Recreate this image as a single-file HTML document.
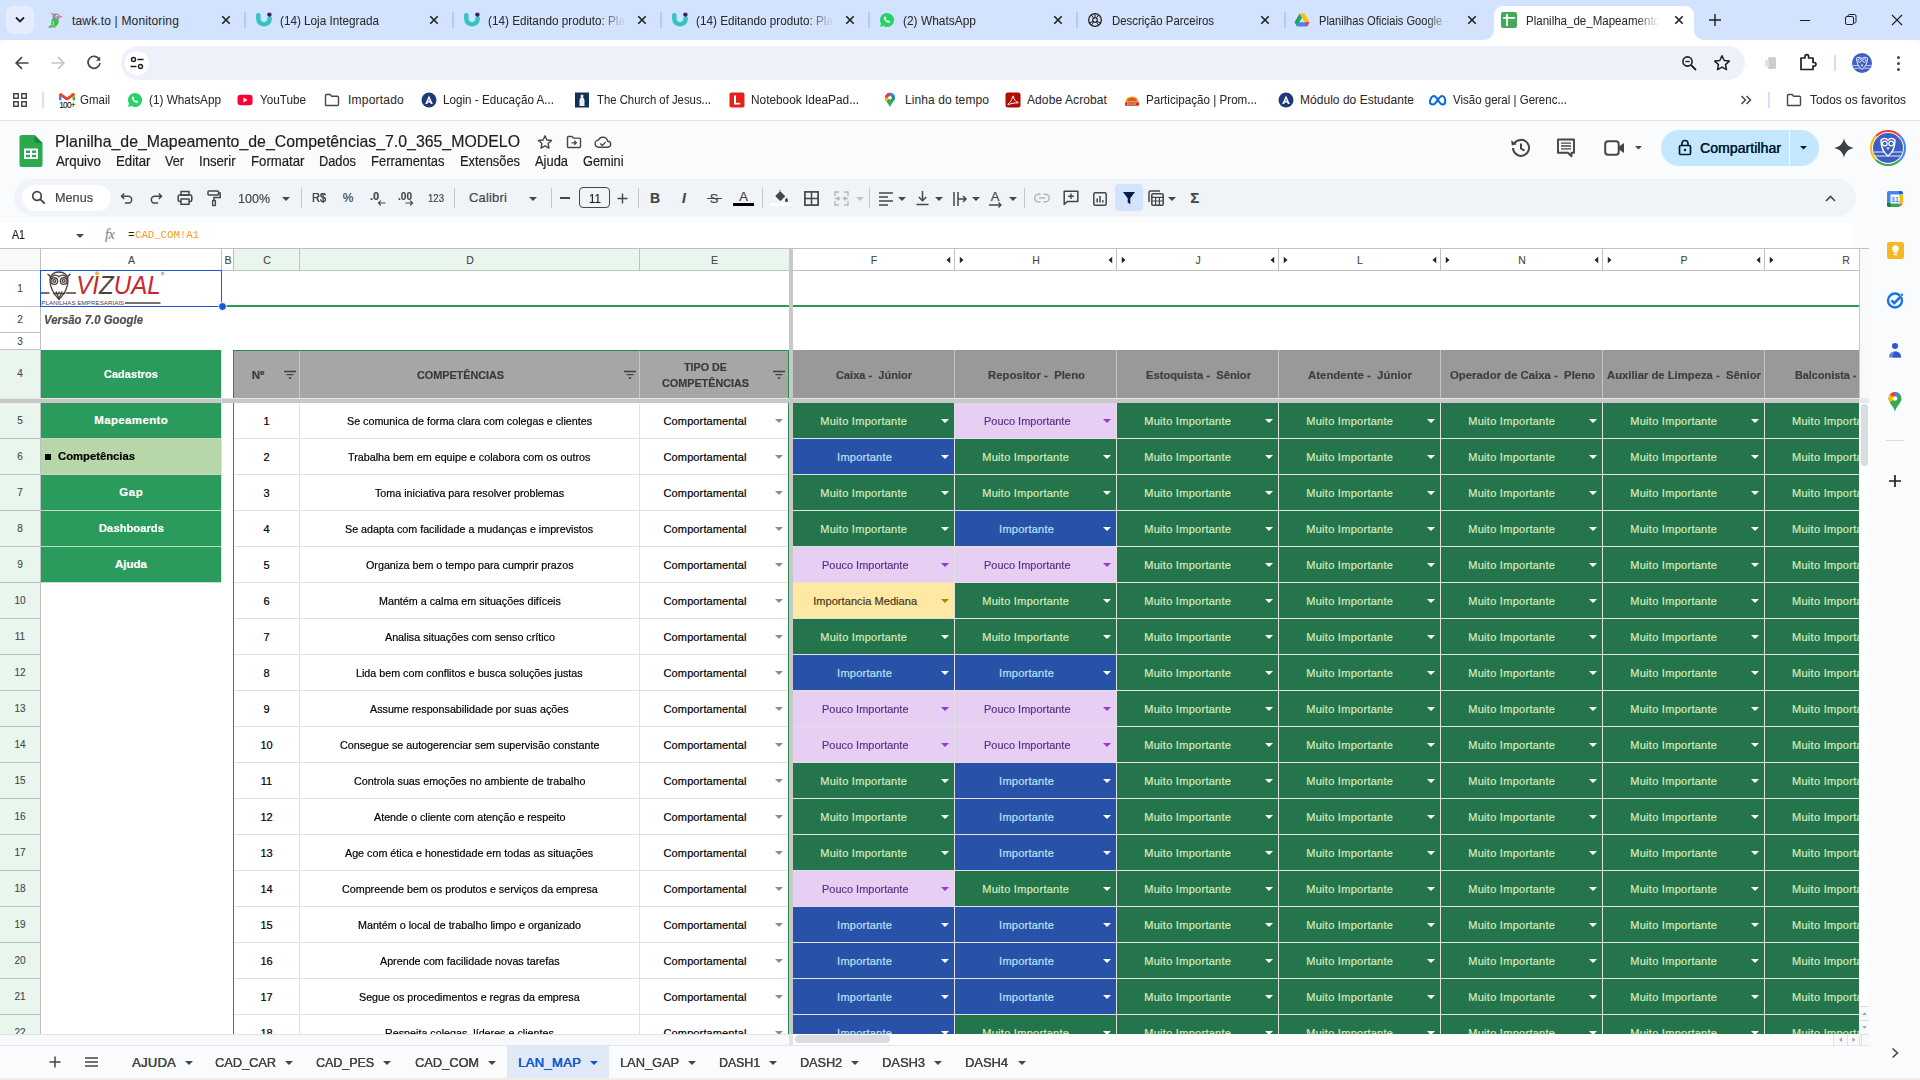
<!DOCTYPE html><html lang="pt-BR"><head><meta charset="utf-8"><title>Planilha_de_Mapeamento_de_Competências_7.0_365_MODELO</title><style>
html,body{margin:0;padding:0}
body{width:1920px;height:1080px;position:relative;overflow:hidden;background:#f9fbfd;font-family:"Liberation Sans",sans-serif;}
.b{position:absolute;display:block}
svg{overflow:visible}
.t{position:absolute;white-space:pre;display:block;transform-origin:0 50%;-webkit-text-stroke:0.2px}
.dd{position:absolute;width:0;height:0;border-left:4px solid transparent;border-right:4px solid transparent;border-top:4px solid #fff;margin-left:-4px}
</style></head><body>
<!--GRID--><div class="b" style="left:0;top:0;width:1859px;height:1034px;overflow:hidden"><div class="b" style="left:0px;top:249px;width:1859px;height:786px;background:#ffffff;"></div>
<div class="b" style="left:0px;top:249px;width:1859px;height:22px;background:#ffffff;"></div>
<div class="b" style="left:0px;top:249px;width:40px;height:22px;background:#f8f9fa;"></div>
<div class="b" style="left:234px;top:249px;width:555px;height:22px;background:#e9f6ee;"></div>
<div class="b" style="left:0px;top:248px;width:1859px;height:1px;background:#c0c0c0;"></div>
<div class="b" style="left:0px;top:270px;width:1859px;height:1px;background:#c0c0c0;"></div>
<div class="b" style="left:221px;top:249px;width:1px;height:22px;background:#c0c0c0;"></div>
<span class="t" style="left:128.00px;top:252.50px;line-height:14px;font-size:10.5px;color:#444746;-webkit-text-stroke:0.1px;">A</span>
<div class="b" style="left:233px;top:249px;width:1px;height:22px;background:#c0c0c0;"></div>
<span class="t" style="left:224.50px;top:252.50px;line-height:14px;font-size:10.5px;color:#444746;-webkit-text-stroke:0.1px;">B</span>
<div class="b" style="left:299px;top:249px;width:1px;height:22px;background:#c0c0c0;"></div>
<span class="t" style="left:263.21px;top:252.50px;line-height:14px;font-size:10.5px;color:#444746;-webkit-text-stroke:0.1px;">C</span>
<div class="b" style="left:639px;top:249px;width:1px;height:22px;background:#c0c0c0;"></div>
<span class="t" style="left:466.21px;top:252.50px;line-height:14px;font-size:10.5px;color:#444746;-webkit-text-stroke:0.1px;">D</span>
<span class="t" style="left:711.00px;top:252.50px;line-height:14px;font-size:10.5px;color:#444746;-webkit-text-stroke:0.1px;">E</span>
<div class="b" style="left:954px;top:249px;width:1px;height:22px;background:#c0c0c0;"></div>
<span class="t" style="left:870.79px;top:252.50px;line-height:14px;font-size:10.5px;color:#444746;-webkit-text-stroke:0.1px;">F</span>
<div class="b" style="left:1116px;top:249px;width:1px;height:22px;background:#c0c0c0;"></div>
<span class="t" style="left:1032.21px;top:252.50px;line-height:14px;font-size:10.5px;color:#444746;-webkit-text-stroke:0.1px;">H</span>
<div class="b" style="left:1278px;top:249px;width:1px;height:22px;background:#c0c0c0;"></div>
<span class="t" style="left:1195.38px;top:252.50px;line-height:14px;font-size:10.5px;color:#444746;-webkit-text-stroke:0.1px;">J</span>
<div class="b" style="left:1440px;top:249px;width:1px;height:22px;background:#c0c0c0;"></div>
<span class="t" style="left:1357.08px;top:252.50px;line-height:14px;font-size:10.5px;color:#444746;-webkit-text-stroke:0.1px;">L</span>
<div class="b" style="left:1602px;top:249px;width:1px;height:22px;background:#c0c0c0;"></div>
<span class="t" style="left:1518.21px;top:252.50px;line-height:14px;font-size:10.5px;color:#444746;-webkit-text-stroke:0.1px;">N</span>
<div class="b" style="left:1764px;top:249px;width:1px;height:22px;background:#c0c0c0;"></div>
<span class="t" style="left:1680.50px;top:252.50px;line-height:14px;font-size:10.5px;color:#444746;-webkit-text-stroke:0.1px;">P</span>
<div class="b" style="left:1926px;top:249px;width:1px;height:22px;background:#c0c0c0;"></div>
<span class="t" style="left:1842.21px;top:252.50px;line-height:14px;font-size:10.5px;color:#444746;-webkit-text-stroke:0.1px;">R</span>
<div class="b" style="left:40px;top:249px;width:1px;height:22px;background:#c0c0c0;"></div>
<svg class="b" style="left:945px;top:256px" width="20" height="8" viewBox="0 0 20 8"><path d="M5.200 .800v6.400L1.500 4zM14.800 .800v6.400L18.500 4z" fill="#222"/></svg>
<svg class="b" style="left:1107px;top:256px" width="20" height="8" viewBox="0 0 20 8"><path d="M5.200 .800v6.400L1.500 4zM14.800 .800v6.400L18.500 4z" fill="#222"/></svg>
<svg class="b" style="left:1269px;top:256px" width="20" height="8" viewBox="0 0 20 8"><path d="M5.200 .800v6.400L1.500 4zM14.800 .800v6.400L18.500 4z" fill="#222"/></svg>
<svg class="b" style="left:1431px;top:256px" width="20" height="8" viewBox="0 0 20 8"><path d="M5.200 .800v6.400L1.500 4zM14.800 .800v6.400L18.500 4z" fill="#222"/></svg>
<svg class="b" style="left:1593px;top:256px" width="20" height="8" viewBox="0 0 20 8"><path d="M5.200 .800v6.400L1.500 4zM14.800 .800v6.400L18.500 4z" fill="#222"/></svg>
<svg class="b" style="left:1755px;top:256px" width="20" height="8" viewBox="0 0 20 8"><path d="M5.200 .800v6.400L1.500 4zM14.800 .800v6.400L18.500 4z" fill="#222"/></svg>
<div class="b" style="left:0px;top:271px;width:40px;height:36px;background:#ffffff;"></div>
<span class="t" style="left:17.22px;top:282.00px;line-height:13px;font-size:10px;color:#444746;-webkit-text-stroke:0.1px;">1</span>
<div class="b" style="left:0px;top:307px;width:40px;height:26px;background:#ffffff;"></div>
<span class="t" style="left:17.22px;top:313.00px;line-height:13px;font-size:10px;color:#444746;-webkit-text-stroke:0.1px;">2</span>
<div class="b" style="left:0px;top:333px;width:40px;height:17px;background:#ffffff;"></div>
<span class="t" style="left:17.22px;top:334.50px;line-height:13px;font-size:10px;color:#444746;-webkit-text-stroke:0.1px;">3</span>
<div class="b" style="left:0px;top:350px;width:40px;height:48px;background:#e9f6ee;"></div>
<span class="t" style="left:17.22px;top:367.00px;line-height:13px;font-size:10px;color:#444746;-webkit-text-stroke:0.1px;">4</span>
<div class="b" style="left:0px;top:403px;width:40px;height:36px;background:#e9f6ee;"></div>
<span class="t" style="left:17.22px;top:414.00px;line-height:13px;font-size:10px;color:#444746;-webkit-text-stroke:0.1px;">5</span>
<div class="b" style="left:0px;top:439px;width:40px;height:36px;background:#e9f6ee;"></div>
<span class="t" style="left:17.22px;top:450.00px;line-height:13px;font-size:10px;color:#444746;-webkit-text-stroke:0.1px;">6</span>
<div class="b" style="left:0px;top:475px;width:40px;height:36px;background:#e9f6ee;"></div>
<span class="t" style="left:17.22px;top:486.00px;line-height:13px;font-size:10px;color:#444746;-webkit-text-stroke:0.1px;">7</span>
<div class="b" style="left:0px;top:511px;width:40px;height:36px;background:#e9f6ee;"></div>
<span class="t" style="left:17.22px;top:522.00px;line-height:13px;font-size:10px;color:#444746;-webkit-text-stroke:0.1px;">8</span>
<div class="b" style="left:0px;top:547px;width:40px;height:36px;background:#e9f6ee;"></div>
<span class="t" style="left:17.22px;top:558.00px;line-height:13px;font-size:10px;color:#444746;-webkit-text-stroke:0.1px;">9</span>
<div class="b" style="left:0px;top:583px;width:40px;height:36px;background:#e9f6ee;"></div>
<span class="t" style="left:14.44px;top:594.00px;line-height:13px;font-size:10px;color:#444746;-webkit-text-stroke:0.1px;">10</span>
<div class="b" style="left:0px;top:619px;width:40px;height:36px;background:#e9f6ee;"></div>
<span class="t" style="left:14.81px;top:630.00px;line-height:13px;font-size:10px;color:#444746;-webkit-text-stroke:0.1px;">11</span>
<div class="b" style="left:0px;top:655px;width:40px;height:36px;background:#e9f6ee;"></div>
<span class="t" style="left:14.44px;top:666.00px;line-height:13px;font-size:10px;color:#444746;-webkit-text-stroke:0.1px;">12</span>
<div class="b" style="left:0px;top:691px;width:40px;height:36px;background:#e9f6ee;"></div>
<span class="t" style="left:14.44px;top:702.00px;line-height:13px;font-size:10px;color:#444746;-webkit-text-stroke:0.1px;">13</span>
<div class="b" style="left:0px;top:727px;width:40px;height:36px;background:#e9f6ee;"></div>
<span class="t" style="left:14.44px;top:738.00px;line-height:13px;font-size:10px;color:#444746;-webkit-text-stroke:0.1px;">14</span>
<div class="b" style="left:0px;top:763px;width:40px;height:36px;background:#e9f6ee;"></div>
<span class="t" style="left:14.44px;top:774.00px;line-height:13px;font-size:10px;color:#444746;-webkit-text-stroke:0.1px;">15</span>
<div class="b" style="left:0px;top:799px;width:40px;height:36px;background:#e9f6ee;"></div>
<span class="t" style="left:14.44px;top:810.00px;line-height:13px;font-size:10px;color:#444746;-webkit-text-stroke:0.1px;">16</span>
<div class="b" style="left:0px;top:835px;width:40px;height:36px;background:#e9f6ee;"></div>
<span class="t" style="left:14.44px;top:846.00px;line-height:13px;font-size:10px;color:#444746;-webkit-text-stroke:0.1px;">17</span>
<div class="b" style="left:0px;top:871px;width:40px;height:36px;background:#e9f6ee;"></div>
<span class="t" style="left:14.44px;top:882.00px;line-height:13px;font-size:10px;color:#444746;-webkit-text-stroke:0.1px;">18</span>
<div class="b" style="left:0px;top:907px;width:40px;height:36px;background:#e9f6ee;"></div>
<span class="t" style="left:14.44px;top:918.00px;line-height:13px;font-size:10px;color:#444746;-webkit-text-stroke:0.1px;">19</span>
<div class="b" style="left:0px;top:943px;width:40px;height:36px;background:#e9f6ee;"></div>
<span class="t" style="left:14.44px;top:954.00px;line-height:13px;font-size:10px;color:#444746;-webkit-text-stroke:0.1px;">20</span>
<div class="b" style="left:0px;top:979px;width:40px;height:36px;background:#e9f6ee;"></div>
<span class="t" style="left:14.44px;top:990.00px;line-height:13px;font-size:10px;color:#444746;-webkit-text-stroke:0.1px;">21</span>
<div class="b" style="left:0px;top:1015px;width:40px;height:36px;background:#e9f6ee;"></div>
<span class="t" style="left:14.44px;top:1026.00px;line-height:13px;font-size:10px;color:#444746;-webkit-text-stroke:0.1px;">22</span>
<div class="b" style="left:0px;top:306px;width:40px;height:1px;background:#c0c0c0;"></div>
<div class="b" style="left:0px;top:332px;width:40px;height:1px;background:#c0c0c0;"></div>
<div class="b" style="left:0px;top:349px;width:40px;height:1px;background:#c0c0c0;"></div>
<div class="b" style="left:0px;top:438px;width:40px;height:1px;background:#c0c0c0;"></div>
<div class="b" style="left:0px;top:474px;width:40px;height:1px;background:#c0c0c0;"></div>
<div class="b" style="left:0px;top:510px;width:40px;height:1px;background:#c0c0c0;"></div>
<div class="b" style="left:0px;top:546px;width:40px;height:1px;background:#c0c0c0;"></div>
<div class="b" style="left:0px;top:582px;width:40px;height:1px;background:#c0c0c0;"></div>
<div class="b" style="left:0px;top:618px;width:40px;height:1px;background:#c0c0c0;"></div>
<div class="b" style="left:0px;top:654px;width:40px;height:1px;background:#c0c0c0;"></div>
<div class="b" style="left:0px;top:690px;width:40px;height:1px;background:#c0c0c0;"></div>
<div class="b" style="left:0px;top:726px;width:40px;height:1px;background:#c0c0c0;"></div>
<div class="b" style="left:0px;top:762px;width:40px;height:1px;background:#c0c0c0;"></div>
<div class="b" style="left:0px;top:798px;width:40px;height:1px;background:#c0c0c0;"></div>
<div class="b" style="left:0px;top:834px;width:40px;height:1px;background:#c0c0c0;"></div>
<div class="b" style="left:0px;top:870px;width:40px;height:1px;background:#c0c0c0;"></div>
<div class="b" style="left:0px;top:906px;width:40px;height:1px;background:#c0c0c0;"></div>
<div class="b" style="left:0px;top:942px;width:40px;height:1px;background:#c0c0c0;"></div>
<div class="b" style="left:0px;top:978px;width:40px;height:1px;background:#c0c0c0;"></div>
<div class="b" style="left:0px;top:1014px;width:40px;height:1px;background:#c0c0c0;"></div>
<div class="b" style="left:40px;top:249px;width:1px;height:786px;background:#c0c0c0;"></div>
<span class="t" style="left:263.44px;top:414.00px;line-height:14px;font-size:11px;color:#000;">1</span>
<span class="t" style="left:346.96px;top:414.00px;line-height:14px;font-size:11px;color:#000;transform:scaleX(0.9753);">Se comunica de forma clara com colegas e clientes</span>
<span class="t" style="left:663.56px;top:414.00px;line-height:14px;font-size:11px;color:#000;letter-spacing:0.121px;">Comportamental</span>
<i class="dd" style="left:779px;top:419px;border-top-color:#8a8d91"></i>
<div class="b" style="left:234px;top:438px;width:555px;height:1px;background:#e1e1e1;"></div>
<div class="b" style="left:793px;top:403px;width:161px;height:35px;background:#24744c;"></div>
<span class="t" style="left:820.24px;top:414.00px;line-height:14px;font-size:11px;color:#d4edbc;letter-spacing:0.279px;">Muito Importante</span>
<i class="dd" style="left:945px;top:419px;border-top-color:#ffffff"></i>
<div class="b" style="left:955px;top:403px;width:161px;height:35px;background:#e6cff2;"></div>
<span class="t" style="left:983.85px;top:414.00px;line-height:14px;font-size:11px;color:#5a3286;transform:scaleX(0.9963);">Pouco Importante</span>
<i class="dd" style="left:1107px;top:419px;border-top-color:#9334e6"></i>
<div class="b" style="left:1117px;top:403px;width:161px;height:35px;background:#24744c;"></div>
<span class="t" style="left:1144.24px;top:414.00px;line-height:14px;font-size:11px;color:#d4edbc;letter-spacing:0.279px;">Muito Importante</span>
<i class="dd" style="left:1269px;top:419px;border-top-color:#ffffff"></i>
<div class="b" style="left:1279px;top:403px;width:161px;height:35px;background:#24744c;"></div>
<span class="t" style="left:1306.24px;top:414.00px;line-height:14px;font-size:11px;color:#d4edbc;letter-spacing:0.279px;">Muito Importante</span>
<i class="dd" style="left:1431px;top:419px;border-top-color:#ffffff"></i>
<div class="b" style="left:1441px;top:403px;width:161px;height:35px;background:#24744c;"></div>
<span class="t" style="left:1468.24px;top:414.00px;line-height:14px;font-size:11px;color:#d4edbc;letter-spacing:0.279px;">Muito Importante</span>
<i class="dd" style="left:1593px;top:419px;border-top-color:#ffffff"></i>
<div class="b" style="left:1603px;top:403px;width:161px;height:35px;background:#24744c;"></div>
<span class="t" style="left:1630.24px;top:414.00px;line-height:14px;font-size:11px;color:#d4edbc;letter-spacing:0.279px;">Muito Importante</span>
<i class="dd" style="left:1755px;top:419px;border-top-color:#ffffff"></i>
<div class="b" style="left:1765px;top:403px;width:94px;height:35px;background:#24744c;"></div>
<div class="b" style="left:1765px;top:403px;width:94px;height:35px;overflow:hidden"><span class="t" style="left:27.00px;top:11.00px;line-height:14px;font-size:11px;color:#d4edbc;letter-spacing:0.279px;">Muito Importante</span></div>
<div class="b" style="left:793px;top:438px;width:1066px;height:1px;background:#e1e1e1;"></div>
<span class="t" style="left:263.44px;top:450.00px;line-height:14px;font-size:11px;color:#000;">2</span>
<span class="t" style="left:348.35px;top:450.00px;line-height:14px;font-size:11px;color:#000;transform:scaleX(0.9753);">Trabalha bem em equipe e colabora com os outros</span>
<span class="t" style="left:663.56px;top:450.00px;line-height:14px;font-size:11px;color:#000;letter-spacing:0.121px;">Comportamental</span>
<i class="dd" style="left:779px;top:455px;border-top-color:#8a8d91"></i>
<div class="b" style="left:234px;top:474px;width:555px;height:1px;background:#e1e1e1;"></div>
<div class="b" style="left:793px;top:439px;width:161px;height:35px;background:#2851a8;"></div>
<span class="t" style="left:837.12px;top:450.00px;line-height:14px;font-size:11px;color:#bfe1f6;letter-spacing:0.242px;">Importante</span>
<i class="dd" style="left:945px;top:455px;border-top-color:#ffffff"></i>
<div class="b" style="left:955px;top:439px;width:161px;height:35px;background:#24744c;"></div>
<span class="t" style="left:982.24px;top:450.00px;line-height:14px;font-size:11px;color:#d4edbc;letter-spacing:0.279px;">Muito Importante</span>
<i class="dd" style="left:1107px;top:455px;border-top-color:#ffffff"></i>
<div class="b" style="left:1117px;top:439px;width:161px;height:35px;background:#24744c;"></div>
<span class="t" style="left:1144.24px;top:450.00px;line-height:14px;font-size:11px;color:#d4edbc;letter-spacing:0.279px;">Muito Importante</span>
<i class="dd" style="left:1269px;top:455px;border-top-color:#ffffff"></i>
<div class="b" style="left:1279px;top:439px;width:161px;height:35px;background:#24744c;"></div>
<span class="t" style="left:1306.24px;top:450.00px;line-height:14px;font-size:11px;color:#d4edbc;letter-spacing:0.279px;">Muito Importante</span>
<i class="dd" style="left:1431px;top:455px;border-top-color:#ffffff"></i>
<div class="b" style="left:1441px;top:439px;width:161px;height:35px;background:#24744c;"></div>
<span class="t" style="left:1468.24px;top:450.00px;line-height:14px;font-size:11px;color:#d4edbc;letter-spacing:0.279px;">Muito Importante</span>
<i class="dd" style="left:1593px;top:455px;border-top-color:#ffffff"></i>
<div class="b" style="left:1603px;top:439px;width:161px;height:35px;background:#24744c;"></div>
<span class="t" style="left:1630.24px;top:450.00px;line-height:14px;font-size:11px;color:#d4edbc;letter-spacing:0.279px;">Muito Importante</span>
<i class="dd" style="left:1755px;top:455px;border-top-color:#ffffff"></i>
<div class="b" style="left:1765px;top:439px;width:94px;height:35px;background:#24744c;"></div>
<div class="b" style="left:1765px;top:439px;width:94px;height:35px;overflow:hidden"><span class="t" style="left:27.00px;top:11.00px;line-height:14px;font-size:11px;color:#d4edbc;letter-spacing:0.279px;">Muito Importante</span></div>
<div class="b" style="left:793px;top:474px;width:1066px;height:1px;background:#e1e1e1;"></div>
<span class="t" style="left:263.44px;top:486.00px;line-height:14px;font-size:11px;color:#000;">3</span>
<span class="t" style="left:374.99px;top:486.00px;line-height:14px;font-size:11px;color:#000;transform:scaleX(0.9753);">Toma iniciativa para resolver problemas</span>
<span class="t" style="left:663.56px;top:486.00px;line-height:14px;font-size:11px;color:#000;letter-spacing:0.121px;">Comportamental</span>
<i class="dd" style="left:779px;top:491px;border-top-color:#8a8d91"></i>
<div class="b" style="left:234px;top:510px;width:555px;height:1px;background:#e1e1e1;"></div>
<div class="b" style="left:793px;top:475px;width:161px;height:35px;background:#24744c;"></div>
<span class="t" style="left:820.24px;top:486.00px;line-height:14px;font-size:11px;color:#d4edbc;letter-spacing:0.279px;">Muito Importante</span>
<i class="dd" style="left:945px;top:491px;border-top-color:#ffffff"></i>
<div class="b" style="left:955px;top:475px;width:161px;height:35px;background:#24744c;"></div>
<span class="t" style="left:982.24px;top:486.00px;line-height:14px;font-size:11px;color:#d4edbc;letter-spacing:0.279px;">Muito Importante</span>
<i class="dd" style="left:1107px;top:491px;border-top-color:#ffffff"></i>
<div class="b" style="left:1117px;top:475px;width:161px;height:35px;background:#24744c;"></div>
<span class="t" style="left:1144.24px;top:486.00px;line-height:14px;font-size:11px;color:#d4edbc;letter-spacing:0.279px;">Muito Importante</span>
<i class="dd" style="left:1269px;top:491px;border-top-color:#ffffff"></i>
<div class="b" style="left:1279px;top:475px;width:161px;height:35px;background:#24744c;"></div>
<span class="t" style="left:1306.24px;top:486.00px;line-height:14px;font-size:11px;color:#d4edbc;letter-spacing:0.279px;">Muito Importante</span>
<i class="dd" style="left:1431px;top:491px;border-top-color:#ffffff"></i>
<div class="b" style="left:1441px;top:475px;width:161px;height:35px;background:#24744c;"></div>
<span class="t" style="left:1468.24px;top:486.00px;line-height:14px;font-size:11px;color:#d4edbc;letter-spacing:0.279px;">Muito Importante</span>
<i class="dd" style="left:1593px;top:491px;border-top-color:#ffffff"></i>
<div class="b" style="left:1603px;top:475px;width:161px;height:35px;background:#24744c;"></div>
<span class="t" style="left:1630.24px;top:486.00px;line-height:14px;font-size:11px;color:#d4edbc;letter-spacing:0.279px;">Muito Importante</span>
<i class="dd" style="left:1755px;top:491px;border-top-color:#ffffff"></i>
<div class="b" style="left:1765px;top:475px;width:94px;height:35px;background:#24744c;"></div>
<div class="b" style="left:1765px;top:475px;width:94px;height:35px;overflow:hidden"><span class="t" style="left:27.00px;top:11.00px;line-height:14px;font-size:11px;color:#d4edbc;letter-spacing:0.279px;">Muito Importante</span></div>
<div class="b" style="left:793px;top:510px;width:1066px;height:1px;background:#e1e1e1;"></div>
<span class="t" style="left:263.44px;top:522.00px;line-height:14px;font-size:11px;color:#000;">4</span>
<span class="t" style="left:345.47px;top:522.00px;line-height:14px;font-size:11px;color:#000;transform:scaleX(0.9753);">Se adapta com facilidade a mudanças e imprevistos</span>
<span class="t" style="left:663.56px;top:522.00px;line-height:14px;font-size:11px;color:#000;letter-spacing:0.121px;">Comportamental</span>
<i class="dd" style="left:779px;top:527px;border-top-color:#8a8d91"></i>
<div class="b" style="left:234px;top:546px;width:555px;height:1px;background:#e1e1e1;"></div>
<div class="b" style="left:793px;top:511px;width:161px;height:35px;background:#24744c;"></div>
<span class="t" style="left:820.24px;top:522.00px;line-height:14px;font-size:11px;color:#d4edbc;letter-spacing:0.279px;">Muito Importante</span>
<i class="dd" style="left:945px;top:527px;border-top-color:#ffffff"></i>
<div class="b" style="left:955px;top:511px;width:161px;height:35px;background:#2851a8;"></div>
<span class="t" style="left:999.12px;top:522.00px;line-height:14px;font-size:11px;color:#bfe1f6;letter-spacing:0.242px;">Importante</span>
<i class="dd" style="left:1107px;top:527px;border-top-color:#ffffff"></i>
<div class="b" style="left:1117px;top:511px;width:161px;height:35px;background:#24744c;"></div>
<span class="t" style="left:1144.24px;top:522.00px;line-height:14px;font-size:11px;color:#d4edbc;letter-spacing:0.279px;">Muito Importante</span>
<i class="dd" style="left:1269px;top:527px;border-top-color:#ffffff"></i>
<div class="b" style="left:1279px;top:511px;width:161px;height:35px;background:#24744c;"></div>
<span class="t" style="left:1306.24px;top:522.00px;line-height:14px;font-size:11px;color:#d4edbc;letter-spacing:0.279px;">Muito Importante</span>
<i class="dd" style="left:1431px;top:527px;border-top-color:#ffffff"></i>
<div class="b" style="left:1441px;top:511px;width:161px;height:35px;background:#24744c;"></div>
<span class="t" style="left:1468.24px;top:522.00px;line-height:14px;font-size:11px;color:#d4edbc;letter-spacing:0.279px;">Muito Importante</span>
<i class="dd" style="left:1593px;top:527px;border-top-color:#ffffff"></i>
<div class="b" style="left:1603px;top:511px;width:161px;height:35px;background:#24744c;"></div>
<span class="t" style="left:1630.24px;top:522.00px;line-height:14px;font-size:11px;color:#d4edbc;letter-spacing:0.279px;">Muito Importante</span>
<i class="dd" style="left:1755px;top:527px;border-top-color:#ffffff"></i>
<div class="b" style="left:1765px;top:511px;width:94px;height:35px;background:#24744c;"></div>
<div class="b" style="left:1765px;top:511px;width:94px;height:35px;overflow:hidden"><span class="t" style="left:27.00px;top:11.00px;line-height:14px;font-size:11px;color:#d4edbc;letter-spacing:0.279px;">Muito Importante</span></div>
<div class="b" style="left:793px;top:546px;width:1066px;height:1px;background:#e1e1e1;"></div>
<span class="t" style="left:263.44px;top:558.00px;line-height:14px;font-size:11px;color:#000;">5</span>
<span class="t" style="left:365.75px;top:558.00px;line-height:14px;font-size:11px;color:#000;transform:scaleX(0.9753);">Organiza bem o tempo para cumprir prazos</span>
<span class="t" style="left:663.56px;top:558.00px;line-height:14px;font-size:11px;color:#000;letter-spacing:0.121px;">Comportamental</span>
<i class="dd" style="left:779px;top:563px;border-top-color:#8a8d91"></i>
<div class="b" style="left:234px;top:582px;width:555px;height:1px;background:#e1e1e1;"></div>
<div class="b" style="left:793px;top:547px;width:161px;height:35px;background:#e6cff2;"></div>
<span class="t" style="left:821.85px;top:558.00px;line-height:14px;font-size:11px;color:#5a3286;transform:scaleX(0.9963);">Pouco Importante</span>
<i class="dd" style="left:945px;top:563px;border-top-color:#9334e6"></i>
<div class="b" style="left:955px;top:547px;width:161px;height:35px;background:#e6cff2;"></div>
<span class="t" style="left:983.85px;top:558.00px;line-height:14px;font-size:11px;color:#5a3286;transform:scaleX(0.9963);">Pouco Importante</span>
<i class="dd" style="left:1107px;top:563px;border-top-color:#9334e6"></i>
<div class="b" style="left:1117px;top:547px;width:161px;height:35px;background:#24744c;"></div>
<span class="t" style="left:1144.24px;top:558.00px;line-height:14px;font-size:11px;color:#d4edbc;letter-spacing:0.279px;">Muito Importante</span>
<i class="dd" style="left:1269px;top:563px;border-top-color:#ffffff"></i>
<div class="b" style="left:1279px;top:547px;width:161px;height:35px;background:#24744c;"></div>
<span class="t" style="left:1306.24px;top:558.00px;line-height:14px;font-size:11px;color:#d4edbc;letter-spacing:0.279px;">Muito Importante</span>
<i class="dd" style="left:1431px;top:563px;border-top-color:#ffffff"></i>
<div class="b" style="left:1441px;top:547px;width:161px;height:35px;background:#24744c;"></div>
<span class="t" style="left:1468.24px;top:558.00px;line-height:14px;font-size:11px;color:#d4edbc;letter-spacing:0.279px;">Muito Importante</span>
<i class="dd" style="left:1593px;top:563px;border-top-color:#ffffff"></i>
<div class="b" style="left:1603px;top:547px;width:161px;height:35px;background:#24744c;"></div>
<span class="t" style="left:1630.24px;top:558.00px;line-height:14px;font-size:11px;color:#d4edbc;letter-spacing:0.279px;">Muito Importante</span>
<i class="dd" style="left:1755px;top:563px;border-top-color:#ffffff"></i>
<div class="b" style="left:1765px;top:547px;width:94px;height:35px;background:#24744c;"></div>
<div class="b" style="left:1765px;top:547px;width:94px;height:35px;overflow:hidden"><span class="t" style="left:27.00px;top:11.00px;line-height:14px;font-size:11px;color:#d4edbc;letter-spacing:0.279px;">Muito Importante</span></div>
<div class="b" style="left:793px;top:582px;width:1066px;height:1px;background:#e1e1e1;"></div>
<span class="t" style="left:263.44px;top:594.00px;line-height:14px;font-size:11px;color:#000;">6</span>
<span class="t" style="left:378.57px;top:594.00px;line-height:14px;font-size:11px;color:#000;transform:scaleX(0.9753);">Mantém a calma em situações difíceis</span>
<span class="t" style="left:663.56px;top:594.00px;line-height:14px;font-size:11px;color:#000;letter-spacing:0.121px;">Comportamental</span>
<i class="dd" style="left:779px;top:599px;border-top-color:#8a8d91"></i>
<div class="b" style="left:234px;top:618px;width:555px;height:1px;background:#e1e1e1;"></div>
<div class="b" style="left:793px;top:583px;width:161px;height:35px;background:#fde8a4;"></div>
<span class="t" style="left:813.13px;top:594.00px;line-height:14px;font-size:11px;color:#473821;letter-spacing:0.068px;">Importancia Mediana</span>
<i class="dd" style="left:945px;top:599px;border-top-color:#b08500"></i>
<div class="b" style="left:955px;top:583px;width:161px;height:35px;background:#24744c;"></div>
<span class="t" style="left:982.24px;top:594.00px;line-height:14px;font-size:11px;color:#d4edbc;letter-spacing:0.279px;">Muito Importante</span>
<i class="dd" style="left:1107px;top:599px;border-top-color:#ffffff"></i>
<div class="b" style="left:1117px;top:583px;width:161px;height:35px;background:#24744c;"></div>
<span class="t" style="left:1144.24px;top:594.00px;line-height:14px;font-size:11px;color:#d4edbc;letter-spacing:0.279px;">Muito Importante</span>
<i class="dd" style="left:1269px;top:599px;border-top-color:#ffffff"></i>
<div class="b" style="left:1279px;top:583px;width:161px;height:35px;background:#24744c;"></div>
<span class="t" style="left:1306.24px;top:594.00px;line-height:14px;font-size:11px;color:#d4edbc;letter-spacing:0.279px;">Muito Importante</span>
<i class="dd" style="left:1431px;top:599px;border-top-color:#ffffff"></i>
<div class="b" style="left:1441px;top:583px;width:161px;height:35px;background:#24744c;"></div>
<span class="t" style="left:1468.24px;top:594.00px;line-height:14px;font-size:11px;color:#d4edbc;letter-spacing:0.279px;">Muito Importante</span>
<i class="dd" style="left:1593px;top:599px;border-top-color:#ffffff"></i>
<div class="b" style="left:1603px;top:583px;width:161px;height:35px;background:#24744c;"></div>
<span class="t" style="left:1630.24px;top:594.00px;line-height:14px;font-size:11px;color:#d4edbc;letter-spacing:0.279px;">Muito Importante</span>
<i class="dd" style="left:1755px;top:599px;border-top-color:#ffffff"></i>
<div class="b" style="left:1765px;top:583px;width:94px;height:35px;background:#24744c;"></div>
<div class="b" style="left:1765px;top:583px;width:94px;height:35px;overflow:hidden"><span class="t" style="left:27.00px;top:11.00px;line-height:14px;font-size:11px;color:#d4edbc;letter-spacing:0.279px;">Muito Importante</span></div>
<div class="b" style="left:793px;top:618px;width:1066px;height:1px;background:#e1e1e1;"></div>
<span class="t" style="left:263.44px;top:630.00px;line-height:14px;font-size:11px;color:#000;">7</span>
<span class="t" style="left:384.53px;top:630.00px;line-height:14px;font-size:11px;color:#000;transform:scaleX(0.9753);">Analisa situações com senso crítico</span>
<span class="t" style="left:663.56px;top:630.00px;line-height:14px;font-size:11px;color:#000;letter-spacing:0.121px;">Comportamental</span>
<i class="dd" style="left:779px;top:635px;border-top-color:#8a8d91"></i>
<div class="b" style="left:234px;top:654px;width:555px;height:1px;background:#e1e1e1;"></div>
<div class="b" style="left:793px;top:619px;width:161px;height:35px;background:#24744c;"></div>
<span class="t" style="left:820.24px;top:630.00px;line-height:14px;font-size:11px;color:#d4edbc;letter-spacing:0.279px;">Muito Importante</span>
<i class="dd" style="left:945px;top:635px;border-top-color:#ffffff"></i>
<div class="b" style="left:955px;top:619px;width:161px;height:35px;background:#24744c;"></div>
<span class="t" style="left:982.24px;top:630.00px;line-height:14px;font-size:11px;color:#d4edbc;letter-spacing:0.279px;">Muito Importante</span>
<i class="dd" style="left:1107px;top:635px;border-top-color:#ffffff"></i>
<div class="b" style="left:1117px;top:619px;width:161px;height:35px;background:#24744c;"></div>
<span class="t" style="left:1144.24px;top:630.00px;line-height:14px;font-size:11px;color:#d4edbc;letter-spacing:0.279px;">Muito Importante</span>
<i class="dd" style="left:1269px;top:635px;border-top-color:#ffffff"></i>
<div class="b" style="left:1279px;top:619px;width:161px;height:35px;background:#24744c;"></div>
<span class="t" style="left:1306.24px;top:630.00px;line-height:14px;font-size:11px;color:#d4edbc;letter-spacing:0.279px;">Muito Importante</span>
<i class="dd" style="left:1431px;top:635px;border-top-color:#ffffff"></i>
<div class="b" style="left:1441px;top:619px;width:161px;height:35px;background:#24744c;"></div>
<span class="t" style="left:1468.24px;top:630.00px;line-height:14px;font-size:11px;color:#d4edbc;letter-spacing:0.279px;">Muito Importante</span>
<i class="dd" style="left:1593px;top:635px;border-top-color:#ffffff"></i>
<div class="b" style="left:1603px;top:619px;width:161px;height:35px;background:#24744c;"></div>
<span class="t" style="left:1630.24px;top:630.00px;line-height:14px;font-size:11px;color:#d4edbc;letter-spacing:0.279px;">Muito Importante</span>
<i class="dd" style="left:1755px;top:635px;border-top-color:#ffffff"></i>
<div class="b" style="left:1765px;top:619px;width:94px;height:35px;background:#24744c;"></div>
<div class="b" style="left:1765px;top:619px;width:94px;height:35px;overflow:hidden"><span class="t" style="left:27.00px;top:11.00px;line-height:14px;font-size:11px;color:#d4edbc;letter-spacing:0.279px;">Muito Importante</span></div>
<div class="b" style="left:793px;top:654px;width:1066px;height:1px;background:#e1e1e1;"></div>
<span class="t" style="left:263.44px;top:666.00px;line-height:14px;font-size:11px;color:#000;">8</span>
<span class="t" style="left:356.20px;top:666.00px;line-height:14px;font-size:11px;color:#000;transform:scaleX(0.9753);">Lida bem com conflitos e busca soluções justas</span>
<span class="t" style="left:663.56px;top:666.00px;line-height:14px;font-size:11px;color:#000;letter-spacing:0.121px;">Comportamental</span>
<i class="dd" style="left:779px;top:671px;border-top-color:#8a8d91"></i>
<div class="b" style="left:234px;top:690px;width:555px;height:1px;background:#e1e1e1;"></div>
<div class="b" style="left:793px;top:655px;width:161px;height:35px;background:#2851a8;"></div>
<span class="t" style="left:837.12px;top:666.00px;line-height:14px;font-size:11px;color:#bfe1f6;letter-spacing:0.242px;">Importante</span>
<i class="dd" style="left:945px;top:671px;border-top-color:#ffffff"></i>
<div class="b" style="left:955px;top:655px;width:161px;height:35px;background:#2851a8;"></div>
<span class="t" style="left:999.12px;top:666.00px;line-height:14px;font-size:11px;color:#bfe1f6;letter-spacing:0.242px;">Importante</span>
<i class="dd" style="left:1107px;top:671px;border-top-color:#ffffff"></i>
<div class="b" style="left:1117px;top:655px;width:161px;height:35px;background:#24744c;"></div>
<span class="t" style="left:1144.24px;top:666.00px;line-height:14px;font-size:11px;color:#d4edbc;letter-spacing:0.279px;">Muito Importante</span>
<i class="dd" style="left:1269px;top:671px;border-top-color:#ffffff"></i>
<div class="b" style="left:1279px;top:655px;width:161px;height:35px;background:#24744c;"></div>
<span class="t" style="left:1306.24px;top:666.00px;line-height:14px;font-size:11px;color:#d4edbc;letter-spacing:0.279px;">Muito Importante</span>
<i class="dd" style="left:1431px;top:671px;border-top-color:#ffffff"></i>
<div class="b" style="left:1441px;top:655px;width:161px;height:35px;background:#24744c;"></div>
<span class="t" style="left:1468.24px;top:666.00px;line-height:14px;font-size:11px;color:#d4edbc;letter-spacing:0.279px;">Muito Importante</span>
<i class="dd" style="left:1593px;top:671px;border-top-color:#ffffff"></i>
<div class="b" style="left:1603px;top:655px;width:161px;height:35px;background:#24744c;"></div>
<span class="t" style="left:1630.24px;top:666.00px;line-height:14px;font-size:11px;color:#d4edbc;letter-spacing:0.279px;">Muito Importante</span>
<i class="dd" style="left:1755px;top:671px;border-top-color:#ffffff"></i>
<div class="b" style="left:1765px;top:655px;width:94px;height:35px;background:#24744c;"></div>
<div class="b" style="left:1765px;top:655px;width:94px;height:35px;overflow:hidden"><span class="t" style="left:27.00px;top:11.00px;line-height:14px;font-size:11px;color:#d4edbc;letter-spacing:0.279px;">Muito Importante</span></div>
<div class="b" style="left:793px;top:690px;width:1066px;height:1px;background:#e1e1e1;"></div>
<span class="t" style="left:263.44px;top:702.00px;line-height:14px;font-size:11px;color:#000;">9</span>
<span class="t" style="left:370.21px;top:702.00px;line-height:14px;font-size:11px;color:#000;transform:scaleX(0.9753);">Assume responsabilidade por suas ações</span>
<span class="t" style="left:663.56px;top:702.00px;line-height:14px;font-size:11px;color:#000;letter-spacing:0.121px;">Comportamental</span>
<i class="dd" style="left:779px;top:707px;border-top-color:#8a8d91"></i>
<div class="b" style="left:234px;top:726px;width:555px;height:1px;background:#e1e1e1;"></div>
<div class="b" style="left:793px;top:691px;width:161px;height:35px;background:#e6cff2;"></div>
<span class="t" style="left:821.85px;top:702.00px;line-height:14px;font-size:11px;color:#5a3286;transform:scaleX(0.9963);">Pouco Importante</span>
<i class="dd" style="left:945px;top:707px;border-top-color:#9334e6"></i>
<div class="b" style="left:955px;top:691px;width:161px;height:35px;background:#e6cff2;"></div>
<span class="t" style="left:983.85px;top:702.00px;line-height:14px;font-size:11px;color:#5a3286;transform:scaleX(0.9963);">Pouco Importante</span>
<i class="dd" style="left:1107px;top:707px;border-top-color:#9334e6"></i>
<div class="b" style="left:1117px;top:691px;width:161px;height:35px;background:#24744c;"></div>
<span class="t" style="left:1144.24px;top:702.00px;line-height:14px;font-size:11px;color:#d4edbc;letter-spacing:0.279px;">Muito Importante</span>
<i class="dd" style="left:1269px;top:707px;border-top-color:#ffffff"></i>
<div class="b" style="left:1279px;top:691px;width:161px;height:35px;background:#24744c;"></div>
<span class="t" style="left:1306.24px;top:702.00px;line-height:14px;font-size:11px;color:#d4edbc;letter-spacing:0.279px;">Muito Importante</span>
<i class="dd" style="left:1431px;top:707px;border-top-color:#ffffff"></i>
<div class="b" style="left:1441px;top:691px;width:161px;height:35px;background:#24744c;"></div>
<span class="t" style="left:1468.24px;top:702.00px;line-height:14px;font-size:11px;color:#d4edbc;letter-spacing:0.279px;">Muito Importante</span>
<i class="dd" style="left:1593px;top:707px;border-top-color:#ffffff"></i>
<div class="b" style="left:1603px;top:691px;width:161px;height:35px;background:#24744c;"></div>
<span class="t" style="left:1630.24px;top:702.00px;line-height:14px;font-size:11px;color:#d4edbc;letter-spacing:0.279px;">Muito Importante</span>
<i class="dd" style="left:1755px;top:707px;border-top-color:#ffffff"></i>
<div class="b" style="left:1765px;top:691px;width:94px;height:35px;background:#24744c;"></div>
<div class="b" style="left:1765px;top:691px;width:94px;height:35px;overflow:hidden"><span class="t" style="left:27.00px;top:11.00px;line-height:14px;font-size:11px;color:#d4edbc;letter-spacing:0.279px;">Muito Importante</span></div>
<div class="b" style="left:793px;top:726px;width:1066px;height:1px;background:#e1e1e1;"></div>
<span class="t" style="left:260.38px;top:738.00px;line-height:14px;font-size:11px;color:#000;">10</span>
<span class="t" style="left:339.79px;top:738.00px;line-height:14px;font-size:11px;color:#000;transform:scaleX(0.9753);">Consegue se autogerenciar sem supervisão constante</span>
<span class="t" style="left:663.56px;top:738.00px;line-height:14px;font-size:11px;color:#000;letter-spacing:0.121px;">Comportamental</span>
<i class="dd" style="left:779px;top:743px;border-top-color:#8a8d91"></i>
<div class="b" style="left:234px;top:762px;width:555px;height:1px;background:#e1e1e1;"></div>
<div class="b" style="left:793px;top:727px;width:161px;height:35px;background:#e6cff2;"></div>
<span class="t" style="left:821.85px;top:738.00px;line-height:14px;font-size:11px;color:#5a3286;transform:scaleX(0.9963);">Pouco Importante</span>
<i class="dd" style="left:945px;top:743px;border-top-color:#9334e6"></i>
<div class="b" style="left:955px;top:727px;width:161px;height:35px;background:#e6cff2;"></div>
<span class="t" style="left:983.85px;top:738.00px;line-height:14px;font-size:11px;color:#5a3286;transform:scaleX(0.9963);">Pouco Importante</span>
<i class="dd" style="left:1107px;top:743px;border-top-color:#9334e6"></i>
<div class="b" style="left:1117px;top:727px;width:161px;height:35px;background:#24744c;"></div>
<span class="t" style="left:1144.24px;top:738.00px;line-height:14px;font-size:11px;color:#d4edbc;letter-spacing:0.279px;">Muito Importante</span>
<i class="dd" style="left:1269px;top:743px;border-top-color:#ffffff"></i>
<div class="b" style="left:1279px;top:727px;width:161px;height:35px;background:#24744c;"></div>
<span class="t" style="left:1306.24px;top:738.00px;line-height:14px;font-size:11px;color:#d4edbc;letter-spacing:0.279px;">Muito Importante</span>
<i class="dd" style="left:1431px;top:743px;border-top-color:#ffffff"></i>
<div class="b" style="left:1441px;top:727px;width:161px;height:35px;background:#24744c;"></div>
<span class="t" style="left:1468.24px;top:738.00px;line-height:14px;font-size:11px;color:#d4edbc;letter-spacing:0.279px;">Muito Importante</span>
<i class="dd" style="left:1593px;top:743px;border-top-color:#ffffff"></i>
<div class="b" style="left:1603px;top:727px;width:161px;height:35px;background:#24744c;"></div>
<span class="t" style="left:1630.24px;top:738.00px;line-height:14px;font-size:11px;color:#d4edbc;letter-spacing:0.279px;">Muito Importante</span>
<i class="dd" style="left:1755px;top:743px;border-top-color:#ffffff"></i>
<div class="b" style="left:1765px;top:727px;width:94px;height:35px;background:#24744c;"></div>
<div class="b" style="left:1765px;top:727px;width:94px;height:35px;overflow:hidden"><span class="t" style="left:27.00px;top:11.00px;line-height:14px;font-size:11px;color:#d4edbc;letter-spacing:0.279px;">Muito Importante</span></div>
<div class="b" style="left:793px;top:762px;width:1066px;height:1px;background:#e1e1e1;"></div>
<span class="t" style="left:260.79px;top:774.00px;line-height:14px;font-size:11px;color:#000;">11</span>
<span class="t" style="left:353.81px;top:774.00px;line-height:14px;font-size:11px;color:#000;transform:scaleX(0.9753);">Controla suas emoções no ambiente de trabalho</span>
<span class="t" style="left:663.56px;top:774.00px;line-height:14px;font-size:11px;color:#000;letter-spacing:0.121px;">Comportamental</span>
<i class="dd" style="left:779px;top:779px;border-top-color:#8a8d91"></i>
<div class="b" style="left:234px;top:798px;width:555px;height:1px;background:#e1e1e1;"></div>
<div class="b" style="left:793px;top:763px;width:161px;height:35px;background:#24744c;"></div>
<span class="t" style="left:820.24px;top:774.00px;line-height:14px;font-size:11px;color:#d4edbc;letter-spacing:0.279px;">Muito Importante</span>
<i class="dd" style="left:945px;top:779px;border-top-color:#ffffff"></i>
<div class="b" style="left:955px;top:763px;width:161px;height:35px;background:#2851a8;"></div>
<span class="t" style="left:999.12px;top:774.00px;line-height:14px;font-size:11px;color:#bfe1f6;letter-spacing:0.242px;">Importante</span>
<i class="dd" style="left:1107px;top:779px;border-top-color:#ffffff"></i>
<div class="b" style="left:1117px;top:763px;width:161px;height:35px;background:#24744c;"></div>
<span class="t" style="left:1144.24px;top:774.00px;line-height:14px;font-size:11px;color:#d4edbc;letter-spacing:0.279px;">Muito Importante</span>
<i class="dd" style="left:1269px;top:779px;border-top-color:#ffffff"></i>
<div class="b" style="left:1279px;top:763px;width:161px;height:35px;background:#24744c;"></div>
<span class="t" style="left:1306.24px;top:774.00px;line-height:14px;font-size:11px;color:#d4edbc;letter-spacing:0.279px;">Muito Importante</span>
<i class="dd" style="left:1431px;top:779px;border-top-color:#ffffff"></i>
<div class="b" style="left:1441px;top:763px;width:161px;height:35px;background:#24744c;"></div>
<span class="t" style="left:1468.24px;top:774.00px;line-height:14px;font-size:11px;color:#d4edbc;letter-spacing:0.279px;">Muito Importante</span>
<i class="dd" style="left:1593px;top:779px;border-top-color:#ffffff"></i>
<div class="b" style="left:1603px;top:763px;width:161px;height:35px;background:#24744c;"></div>
<span class="t" style="left:1630.24px;top:774.00px;line-height:14px;font-size:11px;color:#d4edbc;letter-spacing:0.279px;">Muito Importante</span>
<i class="dd" style="left:1755px;top:779px;border-top-color:#ffffff"></i>
<div class="b" style="left:1765px;top:763px;width:94px;height:35px;background:#24744c;"></div>
<div class="b" style="left:1765px;top:763px;width:94px;height:35px;overflow:hidden"><span class="t" style="left:27.00px;top:11.00px;line-height:14px;font-size:11px;color:#d4edbc;letter-spacing:0.279px;">Muito Importante</span></div>
<div class="b" style="left:793px;top:798px;width:1066px;height:1px;background:#e1e1e1;"></div>
<span class="t" style="left:260.38px;top:810.00px;line-height:14px;font-size:11px;color:#000;">12</span>
<span class="t" style="left:373.78px;top:810.00px;line-height:14px;font-size:11px;color:#000;transform:scaleX(0.9753);">Atende o cliente com atenção e respeito</span>
<span class="t" style="left:663.56px;top:810.00px;line-height:14px;font-size:11px;color:#000;letter-spacing:0.121px;">Comportamental</span>
<i class="dd" style="left:779px;top:815px;border-top-color:#8a8d91"></i>
<div class="b" style="left:234px;top:834px;width:555px;height:1px;background:#e1e1e1;"></div>
<div class="b" style="left:793px;top:799px;width:161px;height:35px;background:#24744c;"></div>
<span class="t" style="left:820.24px;top:810.00px;line-height:14px;font-size:11px;color:#d4edbc;letter-spacing:0.279px;">Muito Importante</span>
<i class="dd" style="left:945px;top:815px;border-top-color:#ffffff"></i>
<div class="b" style="left:955px;top:799px;width:161px;height:35px;background:#2851a8;"></div>
<span class="t" style="left:999.12px;top:810.00px;line-height:14px;font-size:11px;color:#bfe1f6;letter-spacing:0.242px;">Importante</span>
<i class="dd" style="left:1107px;top:815px;border-top-color:#ffffff"></i>
<div class="b" style="left:1117px;top:799px;width:161px;height:35px;background:#24744c;"></div>
<span class="t" style="left:1144.24px;top:810.00px;line-height:14px;font-size:11px;color:#d4edbc;letter-spacing:0.279px;">Muito Importante</span>
<i class="dd" style="left:1269px;top:815px;border-top-color:#ffffff"></i>
<div class="b" style="left:1279px;top:799px;width:161px;height:35px;background:#24744c;"></div>
<span class="t" style="left:1306.24px;top:810.00px;line-height:14px;font-size:11px;color:#d4edbc;letter-spacing:0.279px;">Muito Importante</span>
<i class="dd" style="left:1431px;top:815px;border-top-color:#ffffff"></i>
<div class="b" style="left:1441px;top:799px;width:161px;height:35px;background:#24744c;"></div>
<span class="t" style="left:1468.24px;top:810.00px;line-height:14px;font-size:11px;color:#d4edbc;letter-spacing:0.279px;">Muito Importante</span>
<i class="dd" style="left:1593px;top:815px;border-top-color:#ffffff"></i>
<div class="b" style="left:1603px;top:799px;width:161px;height:35px;background:#24744c;"></div>
<span class="t" style="left:1630.24px;top:810.00px;line-height:14px;font-size:11px;color:#d4edbc;letter-spacing:0.279px;">Muito Importante</span>
<i class="dd" style="left:1755px;top:815px;border-top-color:#ffffff"></i>
<div class="b" style="left:1765px;top:799px;width:94px;height:35px;background:#24744c;"></div>
<div class="b" style="left:1765px;top:799px;width:94px;height:35px;overflow:hidden"><span class="t" style="left:27.00px;top:11.00px;line-height:14px;font-size:11px;color:#d4edbc;letter-spacing:0.279px;">Muito Importante</span></div>
<div class="b" style="left:793px;top:834px;width:1066px;height:1px;background:#e1e1e1;"></div>
<span class="t" style="left:260.38px;top:846.00px;line-height:14px;font-size:11px;color:#000;">13</span>
<span class="t" style="left:345.46px;top:846.00px;line-height:14px;font-size:11px;color:#000;transform:scaleX(0.9753);">Age com ética e honestidade em todas as situações</span>
<span class="t" style="left:663.56px;top:846.00px;line-height:14px;font-size:11px;color:#000;letter-spacing:0.121px;">Comportamental</span>
<i class="dd" style="left:779px;top:851px;border-top-color:#8a8d91"></i>
<div class="b" style="left:234px;top:870px;width:555px;height:1px;background:#e1e1e1;"></div>
<div class="b" style="left:793px;top:835px;width:161px;height:35px;background:#24744c;"></div>
<span class="t" style="left:820.24px;top:846.00px;line-height:14px;font-size:11px;color:#d4edbc;letter-spacing:0.279px;">Muito Importante</span>
<i class="dd" style="left:945px;top:851px;border-top-color:#ffffff"></i>
<div class="b" style="left:955px;top:835px;width:161px;height:35px;background:#2851a8;"></div>
<span class="t" style="left:999.12px;top:846.00px;line-height:14px;font-size:11px;color:#bfe1f6;letter-spacing:0.242px;">Importante</span>
<i class="dd" style="left:1107px;top:851px;border-top-color:#ffffff"></i>
<div class="b" style="left:1117px;top:835px;width:161px;height:35px;background:#24744c;"></div>
<span class="t" style="left:1144.24px;top:846.00px;line-height:14px;font-size:11px;color:#d4edbc;letter-spacing:0.279px;">Muito Importante</span>
<i class="dd" style="left:1269px;top:851px;border-top-color:#ffffff"></i>
<div class="b" style="left:1279px;top:835px;width:161px;height:35px;background:#24744c;"></div>
<span class="t" style="left:1306.24px;top:846.00px;line-height:14px;font-size:11px;color:#d4edbc;letter-spacing:0.279px;">Muito Importante</span>
<i class="dd" style="left:1431px;top:851px;border-top-color:#ffffff"></i>
<div class="b" style="left:1441px;top:835px;width:161px;height:35px;background:#24744c;"></div>
<span class="t" style="left:1468.24px;top:846.00px;line-height:14px;font-size:11px;color:#d4edbc;letter-spacing:0.279px;">Muito Importante</span>
<i class="dd" style="left:1593px;top:851px;border-top-color:#ffffff"></i>
<div class="b" style="left:1603px;top:835px;width:161px;height:35px;background:#24744c;"></div>
<span class="t" style="left:1630.24px;top:846.00px;line-height:14px;font-size:11px;color:#d4edbc;letter-spacing:0.279px;">Muito Importante</span>
<i class="dd" style="left:1755px;top:851px;border-top-color:#ffffff"></i>
<div class="b" style="left:1765px;top:835px;width:94px;height:35px;background:#24744c;"></div>
<div class="b" style="left:1765px;top:835px;width:94px;height:35px;overflow:hidden"><span class="t" style="left:27.00px;top:11.00px;line-height:14px;font-size:11px;color:#d4edbc;letter-spacing:0.279px;">Muito Importante</span></div>
<div class="b" style="left:793px;top:870px;width:1066px;height:1px;background:#e1e1e1;"></div>
<span class="t" style="left:260.38px;top:882.00px;line-height:14px;font-size:11px;color:#000;">14</span>
<span class="t" style="left:341.59px;top:882.00px;line-height:14px;font-size:11px;color:#000;transform:scaleX(0.9753);">Compreende bem os produtos e serviços da empresa</span>
<span class="t" style="left:663.56px;top:882.00px;line-height:14px;font-size:11px;color:#000;letter-spacing:0.121px;">Comportamental</span>
<i class="dd" style="left:779px;top:887px;border-top-color:#8a8d91"></i>
<div class="b" style="left:234px;top:906px;width:555px;height:1px;background:#e1e1e1;"></div>
<div class="b" style="left:793px;top:871px;width:161px;height:35px;background:#e6cff2;"></div>
<span class="t" style="left:821.85px;top:882.00px;line-height:14px;font-size:11px;color:#5a3286;transform:scaleX(0.9963);">Pouco Importante</span>
<i class="dd" style="left:945px;top:887px;border-top-color:#9334e6"></i>
<div class="b" style="left:955px;top:871px;width:161px;height:35px;background:#24744c;"></div>
<span class="t" style="left:982.24px;top:882.00px;line-height:14px;font-size:11px;color:#d4edbc;letter-spacing:0.279px;">Muito Importante</span>
<i class="dd" style="left:1107px;top:887px;border-top-color:#ffffff"></i>
<div class="b" style="left:1117px;top:871px;width:161px;height:35px;background:#24744c;"></div>
<span class="t" style="left:1144.24px;top:882.00px;line-height:14px;font-size:11px;color:#d4edbc;letter-spacing:0.279px;">Muito Importante</span>
<i class="dd" style="left:1269px;top:887px;border-top-color:#ffffff"></i>
<div class="b" style="left:1279px;top:871px;width:161px;height:35px;background:#24744c;"></div>
<span class="t" style="left:1306.24px;top:882.00px;line-height:14px;font-size:11px;color:#d4edbc;letter-spacing:0.279px;">Muito Importante</span>
<i class="dd" style="left:1431px;top:887px;border-top-color:#ffffff"></i>
<div class="b" style="left:1441px;top:871px;width:161px;height:35px;background:#24744c;"></div>
<span class="t" style="left:1468.24px;top:882.00px;line-height:14px;font-size:11px;color:#d4edbc;letter-spacing:0.279px;">Muito Importante</span>
<i class="dd" style="left:1593px;top:887px;border-top-color:#ffffff"></i>
<div class="b" style="left:1603px;top:871px;width:161px;height:35px;background:#24744c;"></div>
<span class="t" style="left:1630.24px;top:882.00px;line-height:14px;font-size:11px;color:#d4edbc;letter-spacing:0.279px;">Muito Importante</span>
<i class="dd" style="left:1755px;top:887px;border-top-color:#ffffff"></i>
<div class="b" style="left:1765px;top:871px;width:94px;height:35px;background:#24744c;"></div>
<div class="b" style="left:1765px;top:871px;width:94px;height:35px;overflow:hidden"><span class="t" style="left:27.00px;top:11.00px;line-height:14px;font-size:11px;color:#d4edbc;letter-spacing:0.279px;">Muito Importante</span></div>
<div class="b" style="left:793px;top:906px;width:1066px;height:1px;background:#e1e1e1;"></div>
<span class="t" style="left:260.38px;top:918.00px;line-height:14px;font-size:11px;color:#000;">15</span>
<span class="t" style="left:357.98px;top:918.00px;line-height:14px;font-size:11px;color:#000;transform:scaleX(0.9753);">Mantém o local de trabalho limpo e organizado</span>
<span class="t" style="left:663.56px;top:918.00px;line-height:14px;font-size:11px;color:#000;letter-spacing:0.121px;">Comportamental</span>
<i class="dd" style="left:779px;top:923px;border-top-color:#8a8d91"></i>
<div class="b" style="left:234px;top:942px;width:555px;height:1px;background:#e1e1e1;"></div>
<div class="b" style="left:793px;top:907px;width:161px;height:35px;background:#2851a8;"></div>
<span class="t" style="left:837.12px;top:918.00px;line-height:14px;font-size:11px;color:#bfe1f6;letter-spacing:0.242px;">Importante</span>
<i class="dd" style="left:945px;top:923px;border-top-color:#ffffff"></i>
<div class="b" style="left:955px;top:907px;width:161px;height:35px;background:#2851a8;"></div>
<span class="t" style="left:999.12px;top:918.00px;line-height:14px;font-size:11px;color:#bfe1f6;letter-spacing:0.242px;">Importante</span>
<i class="dd" style="left:1107px;top:923px;border-top-color:#ffffff"></i>
<div class="b" style="left:1117px;top:907px;width:161px;height:35px;background:#24744c;"></div>
<span class="t" style="left:1144.24px;top:918.00px;line-height:14px;font-size:11px;color:#d4edbc;letter-spacing:0.279px;">Muito Importante</span>
<i class="dd" style="left:1269px;top:923px;border-top-color:#ffffff"></i>
<div class="b" style="left:1279px;top:907px;width:161px;height:35px;background:#24744c;"></div>
<span class="t" style="left:1306.24px;top:918.00px;line-height:14px;font-size:11px;color:#d4edbc;letter-spacing:0.279px;">Muito Importante</span>
<i class="dd" style="left:1431px;top:923px;border-top-color:#ffffff"></i>
<div class="b" style="left:1441px;top:907px;width:161px;height:35px;background:#24744c;"></div>
<span class="t" style="left:1468.24px;top:918.00px;line-height:14px;font-size:11px;color:#d4edbc;letter-spacing:0.279px;">Muito Importante</span>
<i class="dd" style="left:1593px;top:923px;border-top-color:#ffffff"></i>
<div class="b" style="left:1603px;top:907px;width:161px;height:35px;background:#24744c;"></div>
<span class="t" style="left:1630.24px;top:918.00px;line-height:14px;font-size:11px;color:#d4edbc;letter-spacing:0.279px;">Muito Importante</span>
<i class="dd" style="left:1755px;top:923px;border-top-color:#ffffff"></i>
<div class="b" style="left:1765px;top:907px;width:94px;height:35px;background:#24744c;"></div>
<div class="b" style="left:1765px;top:907px;width:94px;height:35px;overflow:hidden"><span class="t" style="left:27.00px;top:11.00px;line-height:14px;font-size:11px;color:#d4edbc;letter-spacing:0.279px;">Muito Importante</span></div>
<div class="b" style="left:793px;top:942px;width:1066px;height:1px;background:#e1e1e1;"></div>
<span class="t" style="left:260.38px;top:954.00px;line-height:14px;font-size:11px;color:#000;">16</span>
<span class="t" style="left:379.75px;top:954.00px;line-height:14px;font-size:11px;color:#000;transform:scaleX(0.9753);">Aprende com facilidade novas tarefas</span>
<span class="t" style="left:663.56px;top:954.00px;line-height:14px;font-size:11px;color:#000;letter-spacing:0.121px;">Comportamental</span>
<i class="dd" style="left:779px;top:959px;border-top-color:#8a8d91"></i>
<div class="b" style="left:234px;top:978px;width:555px;height:1px;background:#e1e1e1;"></div>
<div class="b" style="left:793px;top:943px;width:161px;height:35px;background:#2851a8;"></div>
<span class="t" style="left:837.12px;top:954.00px;line-height:14px;font-size:11px;color:#bfe1f6;letter-spacing:0.242px;">Importante</span>
<i class="dd" style="left:945px;top:959px;border-top-color:#ffffff"></i>
<div class="b" style="left:955px;top:943px;width:161px;height:35px;background:#2851a8;"></div>
<span class="t" style="left:999.12px;top:954.00px;line-height:14px;font-size:11px;color:#bfe1f6;letter-spacing:0.242px;">Importante</span>
<i class="dd" style="left:1107px;top:959px;border-top-color:#ffffff"></i>
<div class="b" style="left:1117px;top:943px;width:161px;height:35px;background:#24744c;"></div>
<span class="t" style="left:1144.24px;top:954.00px;line-height:14px;font-size:11px;color:#d4edbc;letter-spacing:0.279px;">Muito Importante</span>
<i class="dd" style="left:1269px;top:959px;border-top-color:#ffffff"></i>
<div class="b" style="left:1279px;top:943px;width:161px;height:35px;background:#24744c;"></div>
<span class="t" style="left:1306.24px;top:954.00px;line-height:14px;font-size:11px;color:#d4edbc;letter-spacing:0.279px;">Muito Importante</span>
<i class="dd" style="left:1431px;top:959px;border-top-color:#ffffff"></i>
<div class="b" style="left:1441px;top:943px;width:161px;height:35px;background:#24744c;"></div>
<span class="t" style="left:1468.24px;top:954.00px;line-height:14px;font-size:11px;color:#d4edbc;letter-spacing:0.279px;">Muito Importante</span>
<i class="dd" style="left:1593px;top:959px;border-top-color:#ffffff"></i>
<div class="b" style="left:1603px;top:943px;width:161px;height:35px;background:#24744c;"></div>
<span class="t" style="left:1630.24px;top:954.00px;line-height:14px;font-size:11px;color:#d4edbc;letter-spacing:0.279px;">Muito Importante</span>
<i class="dd" style="left:1755px;top:959px;border-top-color:#ffffff"></i>
<div class="b" style="left:1765px;top:943px;width:94px;height:35px;background:#24744c;"></div>
<div class="b" style="left:1765px;top:943px;width:94px;height:35px;overflow:hidden"><span class="t" style="left:27.00px;top:11.00px;line-height:14px;font-size:11px;color:#d4edbc;letter-spacing:0.279px;">Muito Importante</span></div>
<div class="b" style="left:793px;top:978px;width:1066px;height:1px;background:#e1e1e1;"></div>
<span class="t" style="left:260.38px;top:990.00px;line-height:14px;font-size:11px;color:#000;">17</span>
<span class="t" style="left:359.18px;top:990.00px;line-height:14px;font-size:11px;color:#000;transform:scaleX(0.9753);">Segue os procedimentos e regras da empresa</span>
<span class="t" style="left:663.56px;top:990.00px;line-height:14px;font-size:11px;color:#000;letter-spacing:0.121px;">Comportamental</span>
<i class="dd" style="left:779px;top:995px;border-top-color:#8a8d91"></i>
<div class="b" style="left:234px;top:1014px;width:555px;height:1px;background:#e1e1e1;"></div>
<div class="b" style="left:793px;top:979px;width:161px;height:35px;background:#2851a8;"></div>
<span class="t" style="left:837.12px;top:990.00px;line-height:14px;font-size:11px;color:#bfe1f6;letter-spacing:0.242px;">Importante</span>
<i class="dd" style="left:945px;top:995px;border-top-color:#ffffff"></i>
<div class="b" style="left:955px;top:979px;width:161px;height:35px;background:#2851a8;"></div>
<span class="t" style="left:999.12px;top:990.00px;line-height:14px;font-size:11px;color:#bfe1f6;letter-spacing:0.242px;">Importante</span>
<i class="dd" style="left:1107px;top:995px;border-top-color:#ffffff"></i>
<div class="b" style="left:1117px;top:979px;width:161px;height:35px;background:#24744c;"></div>
<span class="t" style="left:1144.24px;top:990.00px;line-height:14px;font-size:11px;color:#d4edbc;letter-spacing:0.279px;">Muito Importante</span>
<i class="dd" style="left:1269px;top:995px;border-top-color:#ffffff"></i>
<div class="b" style="left:1279px;top:979px;width:161px;height:35px;background:#24744c;"></div>
<span class="t" style="left:1306.24px;top:990.00px;line-height:14px;font-size:11px;color:#d4edbc;letter-spacing:0.279px;">Muito Importante</span>
<i class="dd" style="left:1431px;top:995px;border-top-color:#ffffff"></i>
<div class="b" style="left:1441px;top:979px;width:161px;height:35px;background:#24744c;"></div>
<span class="t" style="left:1468.24px;top:990.00px;line-height:14px;font-size:11px;color:#d4edbc;letter-spacing:0.279px;">Muito Importante</span>
<i class="dd" style="left:1593px;top:995px;border-top-color:#ffffff"></i>
<div class="b" style="left:1603px;top:979px;width:161px;height:35px;background:#24744c;"></div>
<span class="t" style="left:1630.24px;top:990.00px;line-height:14px;font-size:11px;color:#d4edbc;letter-spacing:0.279px;">Muito Importante</span>
<i class="dd" style="left:1755px;top:995px;border-top-color:#ffffff"></i>
<div class="b" style="left:1765px;top:979px;width:94px;height:35px;background:#24744c;"></div>
<div class="b" style="left:1765px;top:979px;width:94px;height:35px;overflow:hidden"><span class="t" style="left:27.00px;top:11.00px;line-height:14px;font-size:11px;color:#d4edbc;letter-spacing:0.279px;">Muito Importante</span></div>
<div class="b" style="left:793px;top:1014px;width:1066px;height:1px;background:#e1e1e1;"></div>
<span class="t" style="left:260.38px;top:1026.00px;line-height:14px;font-size:11px;color:#000;">18</span>
<span class="t" style="left:385.12px;top:1026.00px;line-height:14px;font-size:11px;color:#000;transform:scaleX(0.9753);">Respeita colegas, líderes e clientes</span>
<span class="t" style="left:663.56px;top:1026.00px;line-height:14px;font-size:11px;color:#000;letter-spacing:0.121px;">Comportamental</span>
<i class="dd" style="left:779px;top:1031px;border-top-color:#8a8d91"></i>
<div class="b" style="left:234px;top:1050px;width:555px;height:1px;background:#e1e1e1;"></div>
<div class="b" style="left:793px;top:1015px;width:161px;height:35px;background:#2851a8;"></div>
<span class="t" style="left:837.12px;top:1026.00px;line-height:14px;font-size:11px;color:#bfe1f6;letter-spacing:0.242px;">Importante</span>
<i class="dd" style="left:945px;top:1031px;border-top-color:#ffffff"></i>
<div class="b" style="left:955px;top:1015px;width:161px;height:35px;background:#24744c;"></div>
<span class="t" style="left:982.24px;top:1026.00px;line-height:14px;font-size:11px;color:#d4edbc;letter-spacing:0.279px;">Muito Importante</span>
<i class="dd" style="left:1107px;top:1031px;border-top-color:#ffffff"></i>
<div class="b" style="left:1117px;top:1015px;width:161px;height:35px;background:#24744c;"></div>
<span class="t" style="left:1144.24px;top:1026.00px;line-height:14px;font-size:11px;color:#d4edbc;letter-spacing:0.279px;">Muito Importante</span>
<i class="dd" style="left:1269px;top:1031px;border-top-color:#ffffff"></i>
<div class="b" style="left:1279px;top:1015px;width:161px;height:35px;background:#24744c;"></div>
<span class="t" style="left:1306.24px;top:1026.00px;line-height:14px;font-size:11px;color:#d4edbc;letter-spacing:0.279px;">Muito Importante</span>
<i class="dd" style="left:1431px;top:1031px;border-top-color:#ffffff"></i>
<div class="b" style="left:1441px;top:1015px;width:161px;height:35px;background:#24744c;"></div>
<span class="t" style="left:1468.24px;top:1026.00px;line-height:14px;font-size:11px;color:#d4edbc;letter-spacing:0.279px;">Muito Importante</span>
<i class="dd" style="left:1593px;top:1031px;border-top-color:#ffffff"></i>
<div class="b" style="left:1603px;top:1015px;width:161px;height:35px;background:#24744c;"></div>
<span class="t" style="left:1630.24px;top:1026.00px;line-height:14px;font-size:11px;color:#d4edbc;letter-spacing:0.279px;">Muito Importante</span>
<i class="dd" style="left:1755px;top:1031px;border-top-color:#ffffff"></i>
<div class="b" style="left:1765px;top:1015px;width:94px;height:35px;background:#24744c;"></div>
<div class="b" style="left:1765px;top:1015px;width:94px;height:35px;overflow:hidden"><span class="t" style="left:27.00px;top:11.00px;line-height:14px;font-size:11px;color:#d4edbc;letter-spacing:0.279px;">Muito Importante</span></div>
<div class="b" style="left:793px;top:1050px;width:1066px;height:1px;background:#e1e1e1;"></div>
<div class="b" style="left:299px;top:403px;width:1px;height:632px;background:#e1e1e1;"></div>
<div class="b" style="left:639px;top:403px;width:1px;height:632px;background:#e1e1e1;"></div>
<div class="b" style="left:954px;top:403px;width:1px;height:632px;background:#e1e1e1;"></div>
<div class="b" style="left:1116px;top:403px;width:1px;height:632px;background:#e1e1e1;"></div>
<div class="b" style="left:1278px;top:403px;width:1px;height:632px;background:#e1e1e1;"></div>
<div class="b" style="left:1440px;top:403px;width:1px;height:632px;background:#e1e1e1;"></div>
<div class="b" style="left:1602px;top:403px;width:1px;height:632px;background:#e1e1e1;"></div>
<div class="b" style="left:1764px;top:403px;width:1px;height:632px;background:#e1e1e1;"></div>
<div class="b" style="left:233px;top:350px;width:1px;height:685px;background:#2d8a4e;"></div>
<div class="b" style="left:788px;top:350px;width:1px;height:685px;background:#2d8a4e;"></div>
<div class="b" style="left:233px;top:350px;width:556px;height:1px;background:#2d8a4e;"></div>
<div class="b" style="left:234px;top:351px;width:554px;height:47px;background:#a6a6a6;"></div>
<div class="b" style="left:299px;top:351px;width:1px;height:47px;background:#c8c8c8;"></div>
<div class="b" style="left:639px;top:351px;width:1px;height:47px;background:#c8c8c8;"></div>
<span class="t" style="left:251.75px;top:367.50px;line-height:15px;font-size:11.5px;color:#3a3a3a;font-weight:700;">Nº</span>
<span class="t" style="left:417.00px;top:367.50px;line-height:15px;font-size:11.5px;color:#3a3a3a;transform:scaleX(0.9391);font-weight:700;">COMPETÊNCIAS</span>
<span class="t" style="left:683.50px;top:359.50px;line-height:15px;font-size:11.5px;color:#3a3a3a;transform:scaleX(0.9347);font-weight:700;">TIPO DE</span>
<span class="t" style="left:661.50px;top:375.50px;line-height:15px;font-size:11.5px;color:#3a3a3a;transform:scaleX(0.9391);font-weight:700;">COMPETÊNCIAS</span>
<svg class="b" style="left:284px;top:371px" width="12" height="8" viewBox="0 0 12 8"><path d="M0 0.5h12M2.5 3.7h7M4.8 7h2.4" stroke="#3c4043" stroke-width="1.3" fill="none"/></svg>
<svg class="b" style="left:624px;top:371px" width="12" height="8" viewBox="0 0 12 8"><path d="M0 0.5h12M2.5 3.7h7M4.8 7h2.4" stroke="#3c4043" stroke-width="1.3" fill="none"/></svg>
<svg class="b" style="left:773px;top:371px" width="12" height="8" viewBox="0 0 12 8"><path d="M0 0.5h12M2.5 3.7h7M4.8 7h2.4" stroke="#3c4043" stroke-width="1.3" fill="none"/></svg>
<div class="b" style="left:793px;top:350px;width:161px;height:48px;background:#999999;"></div>
<span class="t" style="left:836.00px;top:367.70px;line-height:15px;font-size:11.5px;color:#3f3f3f;transform:scaleX(0.9591);font-weight:700;">Caixa -  Júnior</span>
<div class="b" style="left:955px;top:350px;width:161px;height:48px;background:#999999;"></div>
<span class="t" style="left:987.50px;top:367.70px;line-height:15px;font-size:11.5px;color:#3f3f3f;transform:scaleX(0.9858);font-weight:700;">Repositor -  Pleno</span>
<div class="b" style="left:1117px;top:350px;width:161px;height:48px;background:#999999;"></div>
<span class="t" style="left:1145.50px;top:367.70px;line-height:15px;font-size:11.5px;color:#3f3f3f;transform:scaleX(0.9723);font-weight:700;">Estoquista -  Sênior</span>
<div class="b" style="left:1279px;top:350px;width:161px;height:48px;background:#999999;"></div>
<span class="t" style="left:1308.00px;top:367.70px;line-height:15px;font-size:11.5px;color:#3f3f3f;transform:scaleX(0.9925);font-weight:700;">Atendente -  Júnior</span>
<div class="b" style="left:1441px;top:350px;width:161px;height:48px;background:#999999;"></div>
<span class="t" style="left:1449.50px;top:367.70px;line-height:15px;font-size:11.5px;color:#3f3f3f;transform:scaleX(0.9865);font-weight:700;">Operador de Caixa -  Pleno</span>
<div class="b" style="left:1603px;top:350px;width:161px;height:48px;background:#999999;"></div>
<span class="t" style="left:1607.00px;top:367.70px;line-height:15px;font-size:11.5px;color:#3f3f3f;transform:scaleX(0.9796);font-weight:700;">Auxiliar de Limpeza -  Sênior</span>
<div class="b" style="left:1765px;top:350px;width:94px;height:48px;background:#999999;"></div>
<div class="b" style="left:1765px;top:350px;width:94px;height:48px;overflow:hidden"><span class="t" style="left:30.00px;top:17.50px;line-height:15px;font-size:11.5px;color:#3f3f3f;transform:scaleX(0.9428);font-weight:700;">Balconista -  Pleno</span></div>
<div class="b" style="left:954px;top:350px;width:1px;height:48px;background:#c6c6c6;"></div>
<div class="b" style="left:1116px;top:350px;width:1px;height:48px;background:#c6c6c6;"></div>
<div class="b" style="left:1278px;top:350px;width:1px;height:48px;background:#c6c6c6;"></div>
<div class="b" style="left:1440px;top:350px;width:1px;height:48px;background:#c6c6c6;"></div>
<div class="b" style="left:1602px;top:350px;width:1px;height:48px;background:#c6c6c6;"></div>
<div class="b" style="left:1764px;top:350px;width:1px;height:48px;background:#c6c6c6;"></div>
<div class="b" style="left:41px;top:350px;width:180px;height:48px;background:#2a9b5c;"></div>
<span class="t" style="left:104.00px;top:367.00px;line-height:15px;font-size:11.5px;color:#fff;transform:scaleX(0.9602);font-weight:700;">Cadastros</span>
<div class="b" style="left:41px;top:403px;width:180px;height:35px;background:#2a9b5c;"></div>
<span class="t" style="left:94.19px;top:413.00px;line-height:15px;font-size:11.5px;color:#fff;letter-spacing:0.371px;font-weight:700;">Mapeamento</span>
<div class="b" style="left:41px;top:438px;width:180px;height:1px;background:#c9d8c9;"></div>
<div class="b" style="left:41px;top:439px;width:180px;height:35px;background:#b7d7a8;"></div>
<div class="b" style="left:45px;top:454px;width:6px;height:6px;background:#000;"></div>
<span class="t" style="left:58.00px;top:449.00px;line-height:15px;font-size:11.5px;color:#000;transform:scaleX(0.9796);font-weight:700;">Competências</span>
<div class="b" style="left:41px;top:474px;width:180px;height:1px;background:#c9d8c9;"></div>
<div class="b" style="left:41px;top:475px;width:180px;height:35px;background:#2a9b5c;"></div>
<span class="t" style="left:119.27px;top:485.00px;line-height:15px;font-size:11.5px;color:#fff;letter-spacing:0.545px;font-weight:700;">Gap</span>
<div class="b" style="left:41px;top:510px;width:180px;height:1px;background:#c9d8c9;"></div>
<div class="b" style="left:41px;top:511px;width:180px;height:35px;background:#2a9b5c;"></div>
<span class="t" style="left:98.50px;top:521.00px;line-height:15px;font-size:11.5px;color:#fff;transform:scaleX(0.9780);font-weight:700;">Dashboards</span>
<div class="b" style="left:41px;top:546px;width:180px;height:1px;background:#c9d8c9;"></div>
<div class="b" style="left:41px;top:547px;width:180px;height:35px;background:#2a9b5c;"></div>
<span class="t" style="left:115.01px;top:557.00px;line-height:15px;font-size:11.5px;color:#fff;letter-spacing:0.011px;font-weight:700;">Ajuda</span>
<div class="b" style="left:41px;top:582px;width:180px;height:1px;background:#c9d8c9;"></div>
<svg class="b" style="left:41px;top:271px;" width="126" height="35" viewBox="0 0 126 35"><g fill="none" stroke="#4e403d" stroke-width="1.35"><path d="M0 22h8.500M24.500 22h10.500"/><path d="M6.500 3.200c1.800 1 2.400 1.600 3 2.600M29.500 3.200c-1.800 1-2.400 1.600-3 2.600"/><path d="M18 1c-5.500 0-9 3.200-9 8.200 0 6.500 3.600 13.800 9 19.300 5.400-5.500 9-12.800 9-19.300 0-5-3.500-8.200-9-8.200z"/><path d="M9.300 7c2.500-3.200 6-3.800 8.700-1.200 2.700-2.600 6.200-2 8.700 1.200"/><circle cx="13.300" cy="10" r="3.300"/><circle cx="22.700" cy="10" r="3.300"/><circle cx="13.300" cy="10" r="1.400"/><circle cx="22.700" cy="10" r="1.400"/><path d="M12 22.500h12M15 20.500l1 2M18 20.500v2M21 20.500l-1 2M15.500 22.500L18 27l2.500-4.500"/></g><path d="M84 32h35.500" stroke="#4e403d" stroke-width="1.400"/><circle cx="56" cy="2.200" r="1.900" fill="#f6b21b"/><circle cx="121.700" cy="2.600" r="1.500" fill="none" stroke="#8a8a8a" stroke-width="0.500"/><text x="121.700" y="3.600" text-anchor="middle" font-family="Liberation Sans,sans-serif" font-size="2.600" fill="#777">R</text><text x="0.300" y="33.600" font-family="Liberation Sans,sans-serif" font-size="5.200" fill="#4e403d" textLength="83" lengthAdjust="spacingAndGlyphs">PLANILHAS EMPRESARIAIS</text><text y="23.300" font-family="Liberation Sans,sans-serif" font-size="25.500" font-style="italic" fill="#c8282b" textLength="84.500" lengthAdjust="spacingAndGlyphs" x="35.200">VI<tspan fill="#4e4340">Z</tspan>UAL</text></svg>
<span class="t" style="left:44.00px;top:312.00px;line-height:16px;font-size:12px;color:#505050;transform:scaleX(0.9495);font-weight:700;font-style:italic;">Versão 7.0 Google</span>
<div class="b" style="left:222px;top:305px;width:1637px;height:2px;background:#2d9a50;"></div>
<div class="b" style="left:40px;top:270px;width:181px;height:36px;border:1px solid #1a56db;box-sizing:border-box;width:182px;height:37px;"></div>
<div class="b" style="left:219px;top:303px;width:7px;height:7px;background:#1a56db;border-radius:50%;border:1px solid #fff;box-sizing:content-box;left:218px;top:302px;"></div>
<div class="b" style="left:0px;top:398px;width:1859px;height:1px;background:#e6e6e6;"></div>
<div class="b" style="left:0px;top:399px;width:1859px;height:4px;background:#c8c8c8;"></div>
<div class="b" style="left:221px;top:350px;width:1px;height:232px;background:#e1dfe1;"></div>
<div class="b" style="left:789px;top:249px;width:4px;height:786px;background:#c8c8c8;"></div></div><!--/GRID-->
<div class="b" style="left:0px;top:0px;width:1920px;height:40px;background:#d3e3fd;"></div>
<div class="b" style="left:0px;top:40px;width:1920px;height:81px;background:#ffffff;border-radius:10px 10px 0 0;"></div>
<div class="b" style="left:6px;top:6px;width:28px;height:28px;background:#e5edfc;border-radius:8px"></div>
<svg class="b" style="left:14px;top:16px;" width="12" height="8" viewBox="0 0 12 8"><path d="M2 1.5l4 4 4-4" stroke="#1f1f1f" stroke-width="1.8" fill="none"/></svg>
<div class="b" style="left:1494px;top:6px;width:200px;height:34px;background:#ffffff;border-radius:9px 9px 0 0"></div>
<svg class="b" style="left:1484px;top:30px;" width="10" height="10" viewBox="0 0 10 10"><path d="M10 0v10H0A10 10 0 0 0 10 0z" fill="#fff"/></svg>
<svg class="b" style="left:1694px;top:30px;" width="10" height="10" viewBox="0 0 10 10"><path d="M0 0v10h10A10 10 0 0 1 0 0z" fill="#fff"/></svg>
<span class="t" style="left:72.00px;top:12.50px;line-height:16px;font-size:12px;color:#2a2a2a;letter-spacing:0.159px;-webkit-text-stroke:0.05px;">tawk.to | Monitoring</span>
<svg class="b" style="left:218px;top:12px" width="16" height="16" viewBox="-8 -8 16 16"><path d="M-3.7 -3.7L3.7 3.7M3.7 -3.7L-3.7 3.7" stroke="#1f1f1f" stroke-width="1.6" fill="none"/></svg>
<svg class="b" style="left:47px;top:12px;" width="16" height="16" viewBox="0 0 16 16"><path d="M7.500 5.500c3.500 0 5 2.500 4 5.500-1 3-4.500 4.500-8.500 4.800L.800 15.500l3.700-3C3.800 9.500 4.500 5.500 7.500 5.500z" fill="#3cc24a"/><path d="M5.500 9c1.500 1.800 1.500 3.800 0 5" stroke="#8fe39a" stroke-width="1.200" fill="none"/><circle cx="9" cy="4.800" r="3.400" fill="#8a9096"/><circle cx="10" cy="4.300" r="1.300" fill="#fff"/><circle cx="10.200" cy="4.300" r="0.600" fill="#222"/><path d="M5.500 3.500L4 .800l3.500 1z" fill="#ff5fa2"/><path d="M12 3.200l3.500 1.300-3 1.800z" fill="#ff5fa2"/><path d="M7.500 13.800l1.500 2-2.500-.3z" fill="#ff5fa2"/></svg>
<span class="t" style="left:280.00px;top:12.50px;line-height:16px;font-size:12px;color:#2a2a2a;transform:scaleX(0.9763);-webkit-text-stroke:0.05px;">(14) Loja Integrada</span>
<svg class="b" style="left:426px;top:12px" width="16" height="16" viewBox="-8 -8 16 16"><path d="M-3.7 -3.7L3.7 3.7M3.7 -3.7L-3.7 3.7" stroke="#1f1f1f" stroke-width="1.6" fill="none"/></svg>
<svg class="b" style="left:255.5px;top:12px;" width="16" height="16" viewBox="0 0 16 16"><path d="M2.300 3.200v3.400a5.700 5.700 0 0 0 11.400 0V6.600" fill="none" stroke="#35c4c0" stroke-width="4.600" stroke-linecap="round"/><circle cx="13.400" cy="2.600" r="2.200" fill="#3b1f6b"/></svg>
<span class="t" style="left:488.00px;top:12.50px;line-height:16px;font-size:12px;color:#2a2a2a;transform:scaleX(0.9779);-webkit-text-stroke:0.05px;-webkit-mask-image:linear-gradient(90deg,#000 82%,transparent 100%);mask-image:linear-gradient(90deg,#000 82%,transparent 100%);">(14) Editando produto: Pla</span>
<svg class="b" style="left:634px;top:12px" width="16" height="16" viewBox="-8 -8 16 16"><path d="M-3.7 -3.7L3.7 3.7M3.7 -3.7L-3.7 3.7" stroke="#1f1f1f" stroke-width="1.6" fill="none"/></svg>
<svg class="b" style="left:463.5px;top:12px;" width="16" height="16" viewBox="0 0 16 16"><path d="M2.300 3.200v3.400a5.700 5.700 0 0 0 11.400 0V6.600" fill="none" stroke="#35c4c0" stroke-width="4.600" stroke-linecap="round"/><circle cx="13.400" cy="2.600" r="2.200" fill="#3b1f6b"/></svg>
<span class="t" style="left:696.00px;top:12.50px;line-height:16px;font-size:12px;color:#2a2a2a;transform:scaleX(0.9779);-webkit-text-stroke:0.05px;-webkit-mask-image:linear-gradient(90deg,#000 82%,transparent 100%);mask-image:linear-gradient(90deg,#000 82%,transparent 100%);">(14) Editando produto: Pla</span>
<svg class="b" style="left:842px;top:12px" width="16" height="16" viewBox="-8 -8 16 16"><path d="M-3.7 -3.7L3.7 3.7M3.7 -3.7L-3.7 3.7" stroke="#1f1f1f" stroke-width="1.6" fill="none"/></svg>
<svg class="b" style="left:671.5px;top:12px;" width="16" height="16" viewBox="0 0 16 16"><path d="M2.300 3.200v3.400a5.700 5.700 0 0 0 11.400 0V6.600" fill="none" stroke="#35c4c0" stroke-width="4.600" stroke-linecap="round"/><circle cx="13.400" cy="2.600" r="2.200" fill="#3b1f6b"/></svg>
<span class="t" style="left:903.00px;top:12.50px;line-height:16px;font-size:12px;color:#2a2a2a;transform:scaleX(0.9951);-webkit-text-stroke:0.05px;">(2) WhatsApp</span>
<svg class="b" style="left:1050px;top:12px" width="16" height="16" viewBox="-8 -8 16 16"><path d="M-3.7 -3.7L3.7 3.7M3.7 -3.7L-3.7 3.7" stroke="#1f1f1f" stroke-width="1.6" fill="none"/></svg>
<svg class="b" style="left:879px;top:12px;" width="16" height="16" viewBox="0 0 16 16"><path d="M8 1a7 7 0 0 0-6 10.600L1 15l3.500-1A7 7 0 1 0 8 1z" fill="#25d366"/><path d="M5.500 4.800c.3-.6.700-.5 1-.1l.6 1.100c.1.300-.1.600-.4.900.4 1 1.300 1.800 2.300 2.300.3-.4.600-.6.900-.5l1.200.6c.3.300.3.700-.1 1.100-.7.700-1.700.7-2.800.2C6.700 9.700 5.500 8.300 5 6.800c-.2-.8 0-1.500.5-2z" fill="#fff"/></svg>
<span class="t" style="left:1112.00px;top:12.50px;line-height:16px;font-size:12px;color:#2a2a2a;transform:scaleX(0.9500);-webkit-text-stroke:0.05px;">Descrição Parceiros</span>
<svg class="b" style="left:1257px;top:12px" width="16" height="16" viewBox="-8 -8 16 16"><path d="M-3.7 -3.7L3.7 3.7M3.7 -3.7L-3.7 3.7" stroke="#1f1f1f" stroke-width="1.6" fill="none"/></svg>
<svg class="b" style="left:1087px;top:12px;" width="16" height="16" viewBox="0 0 16 16"><g fill="none" stroke="#1f1f1f" stroke-width="1.300"><circle cx="8" cy="8" r="6.300"/><path d="M8 1.700v6.300l5.400 3.200M8 8L2.600 11.200M4.500 3l7 10M11.500 3l-7 10" stroke-width="1"/></g><circle cx="8" cy="8" r="2.300" fill="#d3e3fd" stroke="#1f1f1f" stroke-width="1.100"/></svg>
<span class="t" style="left:1319.00px;top:12.50px;line-height:16px;font-size:12px;color:#2a2a2a;transform:scaleX(0.9238);-webkit-text-stroke:0.05px;-webkit-mask-image:linear-gradient(90deg,#000 82%,transparent 100%);mask-image:linear-gradient(90deg,#000 82%,transparent 100%);">Planilhas Oficiais Google -</span>
<svg class="b" style="left:1464px;top:12px" width="16" height="16" viewBox="-8 -8 16 16"><path d="M-3.7 -3.7L3.7 3.7M3.7 -3.7L-3.7 3.7" stroke="#1f1f1f" stroke-width="1.6" fill="none"/></svg>
<svg class="b" style="left:1294px;top:12px;" width="16" height="16" viewBox="0 0 16 16"><path d="M5.600 1.500h4.800L15.500 10.300h-4.800z" fill="#fbbc04"/><path d="M5.600 1.500L.5 10.300l2.400 4.200L8 5.700z" fill="#1ea362"/><path d="M5.300 10.300h10.200l-2.400 4.200H2.900z" fill="#4285f4"/><path d="M10.700 10.300h4.800l-2.400 4.200z" fill="#ea4335"/></svg>
<span class="t" style="left:1526.00px;top:12.50px;line-height:16px;font-size:12px;color:#2a2a2a;transform:scaleX(0.9610);-webkit-text-stroke:0.05px;-webkit-mask-image:linear-gradient(90deg,#000 82%,transparent 100%);mask-image:linear-gradient(90deg,#000 82%,transparent 100%);">Planilha_de_Mapeamento</span>
<svg class="b" style="left:1671px;top:12px" width="16" height="16" viewBox="-8 -8 16 16"><path d="M-3.7 -3.7L3.7 3.7M3.7 -3.7L-3.7 3.7" stroke="#1f1f1f" stroke-width="1.6" fill="none"/></svg>
<svg class="b" style="left:1501px;top:12px;" width="16" height="16" viewBox="0 0 16 16"><rect x="0" y="0" width="16" height="16" rx="2" fill="#45a857"/><path d="M5.100 2h1.800v3h7.100v1.700H6.900V14H5.100V6.700H2V5h3.100z" fill="#fff"/></svg>
<div class="b" style="left:244px;top:12px;width:2px;height:16px;background:#b3c8f2;"></div>
<div class="b" style="left:452px;top:12px;width:2px;height:16px;background:#b3c8f2;"></div>
<div class="b" style="left:660px;top:12px;width:2px;height:16px;background:#b3c8f2;"></div>
<div class="b" style="left:868px;top:12px;width:2px;height:16px;background:#b3c8f2;"></div>
<div class="b" style="left:1076px;top:12px;width:2px;height:16px;background:#b3c8f2;"></div>
<div class="b" style="left:1284px;top:12px;width:2px;height:16px;background:#b3c8f2;"></div>
<svg class="b" style="left:1708px;top:13px;" width="14" height="14" viewBox="0 0 14 14"><path d="M7 1v12M1 7h12" stroke="#1f1f1f" stroke-width="1.4"/></svg>
<div class="b" style="left:1800px;top:20px;width:10px;height:1px;background:#1f1f1f;"></div>
<svg class="b" style="left:1845px;top:14px;" width="12" height="12" viewBox="0 0 12 12"><rect x="0.5" y="2.5" width="8" height="8" rx="1.5" fill="none" stroke="#1f1f1f"/><path d="M3 2.5V2a1.5 1.5 0 0 1 1.5-1.5H9.5A1.5 1.5 0 0 1 11 2v5.5A1.5 1.5 0 0 1 9.5 9H9" fill="none" stroke="#1f1f1f"/></svg>
<svg class="b" style="left:1889px;top:12px" width="16" height="16" viewBox="-8 -8 16 16"><path d="M-5 -5L5 5M5 -5L-5 5" stroke="#1f1f1f" stroke-width="1.1" fill="none"/></svg>
<svg class="b" style="left:14px;top:55px;" width="16" height="16" viewBox="0 0 16 16"><path d="M14.5 8H2.5M8 2.2L2.2 8 8 13.8" stroke="#474747" stroke-width="1.7" fill="none"/></svg>
<svg class="b" style="left:50px;top:55px;" width="16" height="16" viewBox="0 0 16 16"><path d="M1.5 8h12M8 2.2L13.8 8 8 13.8" stroke="#c4c7c5" stroke-width="1.7" fill="none"/></svg>
<svg class="b" style="left:86px;top:55px;" width="16" height="16" viewBox="0 0 16 16"><path d="M13.2 4.2A6 6 0 1 0 14 8" stroke="#474747" stroke-width="1.7" fill="none"/><path d="M14.2 1.5v4.2H10z" fill="#474747"/></svg>
<div class="b" style="left:121px;top:46px;width:1624px;height:34px;background:#edf2fa;border-radius:17px"></div>
<div class="b" style="left:125px;top:51px;width:24px;height:24px;background:#ffffff;border-radius:12px"></div>
<svg class="b" style="left:130px;top:56px;" width="14" height="14" viewBox="0 0 14 14"><circle cx="3.5" cy="3.5" r="2" fill="none" stroke="#1f1f1f" stroke-width="1.5"/><path d="M7.5 3.5h6" stroke="#1f1f1f" stroke-width="1.5"/><circle cx="10.5" cy="10.5" r="2" fill="none" stroke="#1f1f1f" stroke-width="1.5"/><path d="M0.5 10.5h6" stroke="#1f1f1f" stroke-width="1.5"/></svg>
<svg class="b" style="left:1681px;top:55px;" width="16" height="16" viewBox="0 0 16 16"><circle cx="6.5" cy="6.5" r="4.6" fill="none" stroke="#1f1f1f" stroke-width="1.6"/><path d="M10 10l5 5" stroke="#1f1f1f" stroke-width="1.8"/><path d="M4.3 6.5h4.4" stroke="#1f1f1f" stroke-width="1.3"/></svg>
<svg class="b" style="left:1713px;top:54px;" width="18" height="18" viewBox="0 0 18 18"><path d="M9 1.8l2.2 4.7 5.1.6-3.8 3.5 1 5L9 13.1l-4.5 2.5 1-5L1.7 7.1l5.1-.6z" fill="none" stroke="#1f1f1f" stroke-width="1.5" stroke-linejoin="round"/></svg>
<svg class="b" style="left:1764px;top:56px;" width="14" height="14" viewBox="0 0 14 14"><rect x="4" y="1" width="8" height="12" rx="1.5" fill="#c9cdd4"/><rect x="1" y="4" width="4" height="7" rx="1" fill="#dfe2e7"/></svg>
<svg class="b" style="left:1799px;top:54px;" width="18" height="18" viewBox="0 0 18 18"><path d="M2 5.5h4V4a1.8 1.8 0 0 1 3.6 0v1.5H14V10h1.2a1.8 1.8 0 0 1 0 3.6H14V17H2z" fill="none" stroke="#1f1f1f" stroke-width="1.7" stroke-linejoin="round" transform="translate(0,-1.5)"/></svg>
<div class="b" style="left:1834px;top:55px;width:2px;height:16px;background:#cfdef9;"></div>
<svg class="b" style="left:1852px;top:53px;" width="20" height="20" viewBox="0 0 20 20"><circle cx="10" cy="10" r="10" fill="#3f5fc4"/><path d="M1 12.500h18M2 15.200h16" stroke="#dfe6f7" stroke-width="0.800"/><path d="M4.500 5.200c1.500-1.200 3.800-1.200 5.500.3 1.700-1.500 4-1.500 5.500-.3-.2 5-2.200 8.800-5.500 11.300C6.700 14 4.700 10.200 4.500 5.200z" fill="#3f5fc4" stroke="#eef2fb" stroke-width="1"/><circle cx="7.700" cy="7.400" r="1.700" fill="none" stroke="#eef2fb" stroke-width="0.900"/><circle cx="12.300" cy="7.400" r="1.700" fill="none" stroke="#eef2fb" stroke-width="0.900"/><path d="M8.800 11.500h2.400L10 14z" fill="#eef2fb"/></svg>
<div class="b" style="left:1896.5px;top:55.5px;width:3px;height:3px;background:#474747;border-radius:50%"></div>
<div class="b" style="left:1896.5px;top:61.5px;width:3px;height:3px;background:#474747;border-radius:50%"></div>
<div class="b" style="left:1896.5px;top:67.5px;width:3px;height:3px;background:#474747;border-radius:50%"></div>
<svg class="b" style="left:13px;top:93px;" width="14" height="14" viewBox="0 0 14 14"><g fill="none" stroke="#474747" stroke-width="1.500"><rect x=".750" y=".750" width="4.500" height="4.500"/><rect x="8.750" y=".750" width="4.500" height="4.500"/><rect x=".750" y="8.750" width="4.500" height="4.500"/><rect x="8.750" y="8.750" width="4.500" height="4.500"/></g></svg>
<div class="b" style="left:42px;top:92px;width:2px;height:16px;background:#d3e1fa;"></div>
<span class="t" style="left:80.00px;top:92.00px;line-height:16px;font-size:12px;color:#2a2a2a;transform:scaleX(0.9574);-webkit-text-stroke:0.05px;">Gmail</span>
<svg class="b" style="left:59px;top:92px;" width="16" height="16" viewBox="0 0 16 16"><path d="M1.200 2.200v6.500" stroke="#4285f4" stroke-width="2.400"/><path d="M14.800 2.200v6.500" stroke="#34a853" stroke-width="2.400"/><path d="M12 1.200h3.300a.700 .700 0 0 1 .700 .700v2.300L13.500 6z" fill="#fbbc04"/><path d="M.800 1.800L8 7.200l7.200-5.400" fill="none" stroke="#ea4335" stroke-width="2.800" stroke-linejoin="round"/><rect x="0" y="8.300" width="16" height="7.700" fill="#fff" opacity=".85"/><text x="0.300" y="15.600" font-family="Liberation Sans,sans-serif" font-size="8.800" fill="#000" letter-spacing="-0.900" textLength="15.400" lengthAdjust="spacingAndGlyphs">100+</text></svg>
<span class="t" style="left:149.00px;top:92.00px;line-height:16px;font-size:12px;color:#2a2a2a;transform:scaleX(0.9814);-webkit-text-stroke:0.05px;">(1) WhatsApp</span>
<svg class="b" style="left:127px;top:92px;" width="16" height="16" viewBox="0 0 16 16"><path d="M8 1a7 7 0 0 0-6 10.600L1 15l3.500-1A7 7 0 1 0 8 1z" fill="#25d366"/><path d="M5.500 4.800c.3-.6.700-.5 1-.1l.6 1.100c.1.300-.1.600-.4.900.4 1 1.300 1.800 2.300 2.300.3-.4.600-.6.900-.5l1.200.6c.3.300.3.700-.1 1.100-.7.700-1.700.7-2.800.2C6.700 9.700 5.500 8.300 5 6.800c-.2-.8 0-1.500.5-2z" fill="#fff"/></svg>
<span class="t" style="left:260.00px;top:92.00px;line-height:16px;font-size:12px;color:#2a2a2a;transform:scaleX(0.9755);-webkit-text-stroke:0.05px;">YouTube</span>
<svg class="b" style="left:237px;top:92px;" width="16" height="16" viewBox="0 0 16 16"><rect x="0.500" y="2.800" width="15" height="10.400" rx="3" fill="#ff0033"/><path d="M6.400 5.600v4.800L10.600 8z" fill="#fff"/></svg>
<span class="t" style="left:348.00px;top:92.00px;line-height:16px;font-size:12px;color:#2a2a2a;letter-spacing:0.219px;-webkit-text-stroke:0.05px;">Importado</span>
<svg class="b" style="left:324px;top:92px;" width="16" height="16" viewBox="0 0 16 16"><path d="M1.500 3.500a1 1 0 0 1 1-1h3.600l1.600 1.700h5.800a1 1 0 0 1 1 1v7.300a1 1 0 0 1-1 1h-11a1 1 0 0 1-1-1z" fill="none" stroke="#474747" stroke-width="1.400"/></svg>
<span class="t" style="left:443.00px;top:92.00px;line-height:16px;font-size:12px;color:#2a2a2a;transform:scaleX(0.9730);-webkit-text-stroke:0.05px;">Login - Educação A...</span>
<svg class="b" style="left:421px;top:92px;" width="16" height="16" viewBox="0 0 16 16"><circle cx="8" cy="8" r="7.500" fill="#1e3a7b"/><path d="M4.200 12L8 3.500 11.800 12h-2l-.6-1.600H6.800L6.200 12zM7.300 9h1.400L8 6.800z" fill="#fff"/></svg>
<span class="t" style="left:597.00px;top:92.00px;line-height:16px;font-size:12px;color:#2a2a2a;transform:scaleX(0.9443);-webkit-text-stroke:0.05px;">The Church of Jesus...</span>
<svg class="b" style="left:574px;top:92px;" width="16" height="16" viewBox="0 0 16 16"><rect x="1" y="0.500" width="14" height="15" fill="#14305a"/><path d="M8 2.500c1 0 1.500.8 1.500 1.600 0 .6-.3 1-.6 1.300 1 .5 1.600 1.800 1.600 3.600V14H5.500V9c0-1.800.6-3.100 1.600-3.600-.3-.3-.6-.7-.6-1.300 0-.8.500-1.600 1.500-1.600z" fill="#e9edf3"/></svg>
<span class="t" style="left:751.00px;top:92.00px;line-height:16px;font-size:12px;color:#2a2a2a;transform:scaleX(0.9871);-webkit-text-stroke:0.05px;">Notebook IdeaPad...</span>
<svg class="b" style="left:729px;top:92px;" width="16" height="16" viewBox="0 0 16 16"><rect x="0.500" y="0.500" width="15" height="15" rx="2" fill="#e2231a"/><path d="M5 3.500h2v7.200h4.200v1.800H5z" fill="#fff"/></svg>
<span class="t" style="left:905.00px;top:92.00px;line-height:16px;font-size:12px;color:#2a2a2a;letter-spacing:0.091px;-webkit-text-stroke:0.05px;">Linha do tempo</span>
<svg class="b" style="left:882px;top:92px;" width="16" height="16" viewBox="0 0 16 16"><path d="M8 .8a5 5 0 0 0-5 5c0 3.300 3.600 5.400 5 9.400 1.400-4 5-6.100 5-9.400a5 5 0 0 0-5-5z" fill="#34a853"/><path d="M8 .8a5 5 0 0 0-5 5c0 1 .3 1.800.8 2.600L8 5.800z" fill="#ea4335" transform="translate(0,0)"/><path d="M3 5.800c0 1.400.7 2.600 1.600 3.800L8 5.800z" fill="#fbbc04"/><path d="M8 .8v5l4-3.100A5 5 0 0 0 8 .8z" fill="#4285f4"/><path d="M8 5.800l4-3.100c.6.900 1 1.900 1 3.100 0 1.200-.5 2.300-1.200 3.300z" fill="#1a73e8" opacity="0.550"/><circle cx="8" cy="5.800" r="1.800" fill="#fff"/></svg>
<span class="t" style="left:1027.00px;top:92.00px;line-height:16px;font-size:12px;color:#2a2a2a;letter-spacing:0.098px;-webkit-text-stroke:0.05px;">Adobe Acrobat</span>
<svg class="b" style="left:1005px;top:92px;" width="16" height="16" viewBox="0 0 16 16"><rect x="0.500" y="0.500" width="15" height="15" rx="2.500" fill="#b30b00"/><path d="M3.200 11.800c1.800-1 3.600-3.600 4.400-7.200.2-1 1-1 1 0 0 2.200 1.600 5 4.200 5.600 .8.200.6.900-.2.800-3-.4-6.400.4-9 1.600-.8.300-1.100-.4-.4-.8z" fill="none" stroke="#fff" stroke-width="1"/></svg>
<span class="t" style="left:1146.00px;top:92.00px;line-height:16px;font-size:12px;color:#2a2a2a;transform:scaleX(0.9695);-webkit-text-stroke:0.05px;">Participação | Prom...</span>
<svg class="b" style="left:1124px;top:92px;" width="16" height="16" viewBox="0 0 16 16"><path d="M1.500 10a6.500 5.500 0 0 1 13 0z" fill="#f4a21c"/><path d="M3.500 9a4.500 3.600 0 0 1 9 0z" fill="#e2571d"/><rect x="1" y="10.300" width="14" height="3.400" rx="0.600" fill="#c8301e"/><path d="M3 12h10" stroke="#fff" stroke-width="1" stroke-dasharray="1.600 0.900"/></svg>
<span class="t" style="left:1300.00px;top:92.00px;line-height:16px;font-size:12px;color:#2a2a2a;letter-spacing:0.031px;-webkit-text-stroke:0.05px;">Módulo do Estudante</span>
<svg class="b" style="left:1278px;top:92px;" width="16" height="16" viewBox="0 0 16 16"><circle cx="8" cy="8" r="7.500" fill="#1e3a7b"/><path d="M4.200 12L8 3.500 11.800 12h-2l-.6-1.600H6.800L6.200 12zM7.300 9h1.400L8 6.800z" fill="#fff"/></svg>
<span class="t" style="left:1453.00px;top:92.00px;line-height:16px;font-size:12px;color:#2a2a2a;transform:scaleX(0.9583);-webkit-text-stroke:0.05px;">Visão geral | Gerenc...</span>
<svg class="b" style="left:1428px;top:92px;" width="20" height="16" viewBox="0 0 20 16"><path d="M2 10.500C2 6.500 4 4 6 4c3 0 5 8.500 8.500 8.500 1.800 0 2.800-1.500 2.800-3.500 0-3-1.600-5-3.300-5C10.800 4 8.500 12.500 5 12.500c-1.800 0-3-1-3-2z" fill="none" stroke="#0668e1" stroke-width="2"/></svg>
<span class="t" style="left:1810.00px;top:92.00px;line-height:16px;font-size:12px;color:#2a2a2a;transform:scaleX(0.9926);-webkit-text-stroke:0.05px;">Todos os favoritos</span>
<svg class="b" style="left:1786px;top:92px;" width="16" height="16" viewBox="0 0 16 16"><path d="M1.500 3.500a1 1 0 0 1 1-1h3.600l1.600 1.700h5.800a1 1 0 0 1 1 1v7.300a1 1 0 0 1-1 1h-11a1 1 0 0 1-1-1z" fill="none" stroke="#474747" stroke-width="1.400"/></svg>
<svg class="b" style="left:1740px;top:95px;" width="12" height="10" viewBox="0 0 12 10"><path d="M1.5 1l4 4-4 4M6.5 1l4 4-4 4" stroke="#474747" stroke-width="1.5" fill="none"/></svg>
<div class="b" style="left:1768px;top:92px;width:2px;height:16px;background:#d3e1fa;"></div>
<div class="b" style="left:0px;top:120px;width:1920px;height:1px;background:#e1e3e6;"></div>
<div class="b" style="left:0px;top:121px;width:1920px;height:128px;background:#f9fbfd;"></div>
<svg class="b" style="left:19px;top:135px;" width="24" height="32" viewBox="0 0 23 32"><path d="M2.500 0h12.500l8 8v21.500a2.500 2.500 0 0 1-2.500 2.500h-18a2.500 2.500 0 0 1-2.500-2.500v-27a2.500 2.500 0 0 1 2.500-2.500z" fill="#2ca84f"/><path d="M15 0l8 8h-5.500a2.500 2.500 0 0 1-2.500-2.500z" fill="#1f8a3d"/><path d="M4.500 13.500h14v10.500h-14zM6.400 15.400v2.500h4.200v-2.500zM12.400 15.400v2.500h4.200v-2.500zM6.400 19.700v2.500h4.200v-2.500zM12.400 19.700v2.500h4.200v-2.500z" fill="#fff" fill-rule="evenodd"/></svg>
<span class="t" style="left:55.00px;top:129.50px;line-height:24px;font-size:17px;color:#1f1f1f;transform:scaleX(0.9336);">Planilha_de_Mapeamento_de_Competências_7.0_365_MODELO</span>
<svg class="b" style="left:537px;top:134px;" width="16" height="16" viewBox="0 0 16 16"><path d="M8 1.800l1.900 4.200 4.600.5-3.400 3.100.9 4.500L8 11.800l-4 2.300.9-4.500L1.500 6.500l4.600-.5z" fill="none" stroke="#444746" stroke-width="1.400" stroke-linejoin="round"/></svg>
<svg class="b" style="left:566px;top:134px;" width="16" height="16" viewBox="0 0 16 16"><path d="M1.500 3.500a1 1 0 0 1 1-1h3.400l1.500 1.600h6.100a1 1 0 0 1 1 1v7.400a1 1 0 0 1-1 1h-11a1 1 0 0 1-1-1z" fill="none" stroke="#444746" stroke-width="1.400"/><path d="M5.500 8.800h4.500M8.300 6.800l2 2-2 2" fill="none" stroke="#444746" stroke-width="1.300"/></svg>
<svg class="b" style="left:594px;top:134px;" width="18" height="16" viewBox="0 0 18 16"><path d="M4.800 13.200a3.600 3.600 0 0 1-.3-7.200 4.800 4.800 0 0 1 9.100 1.200 3 3 0 0 1 .2 6z" fill="none" stroke="#444746" stroke-width="1.400" stroke-linejoin="round"/><path d="M6.300 9.500l2 2 3.500-3.600" fill="none" stroke="#444746" stroke-width="1.300"/></svg>
<span class="t" style="left:56.00px;top:152.00px;line-height:18px;font-size:14px;color:#1f1f1f;transform:scaleX(0.9480);">Arquivo</span>
<span class="t" style="left:115.50px;top:152.00px;line-height:18px;font-size:14px;color:#1f1f1f;transform:scaleX(0.9433);">Editar</span>
<span class="t" style="left:165.00px;top:152.00px;line-height:18px;font-size:14px;color:#1f1f1f;transform:scaleX(0.9042);">Ver</span>
<span class="t" style="left:199.00px;top:152.00px;line-height:18px;font-size:14px;color:#1f1f1f;transform:scaleX(0.9384);">Inserir</span>
<span class="t" style="left:250.50px;top:152.00px;line-height:18px;font-size:14px;color:#1f1f1f;transform:scaleX(0.9421);">Formatar</span>
<span class="t" style="left:319.00px;top:152.00px;line-height:18px;font-size:14px;color:#1f1f1f;transform:scaleX(0.9143);">Dados</span>
<span class="t" style="left:371.00px;top:152.00px;line-height:18px;font-size:14px;color:#1f1f1f;transform:scaleX(0.9262);">Ferramentas</span>
<span class="t" style="left:459.50px;top:152.00px;line-height:18px;font-size:14px;color:#1f1f1f;transform:scaleX(0.9178);">Extensões</span>
<span class="t" style="left:534.50px;top:152.00px;line-height:18px;font-size:14px;color:#1f1f1f;transform:scaleX(0.9216);">Ajuda</span>
<span class="t" style="left:582.50px;top:152.00px;line-height:18px;font-size:14px;color:#1f1f1f;transform:scaleX(0.9133);">Gemini</span>
<svg class="b" style="left:1510px;top:137px;" width="22" height="22" viewBox="0 0 22 22"><path d="M4.300 6.500A8 8 0 1 1 3 11" fill="none" stroke="#444746" stroke-width="2"/><path d="M1.200 3.200l.6 5.200 5-1.200z" fill="#444746"/><path d="M11 6.500v5l3.500 2.200" fill="none" stroke="#444746" stroke-width="2"/></svg>
<svg class="b" style="left:1556px;top:138px;" width="20" height="20" viewBox="0 0 20 20"><path d="M2 1.500h16v13.200h-2.500v3.500l-3.600-3.500H2z" fill="none" stroke="#444746" stroke-width="1.900" stroke-linejoin="round"/><path d="M5 5.200h10M5 8h10M5 10.800h10" stroke="#444746" stroke-width="1.300"/></svg>
<svg class="b" style="left:1604px;top:139px;" width="22" height="18" viewBox="0 0 22 18"><rect x="1.200" y="2.200" width="13.500" height="13.600" rx="2.800" fill="none" stroke="#444746" stroke-width="2"/><path d="M15 7.500l5-3.500v10l-5-3.500z" fill="#444746"/></svg>
<svg class="b" style="left:1634.5px;top:145.75px;" width="7" height="3.5" viewBox="0 0 7 3.5"><path d="M0 0h7L3.5 3.5z" fill="#444746"/></svg>
<div class="b" style="left:1661px;top:130px;width:158px;height:36px;background:#c2e7ff;border-radius:18px"></div>
<div class="b" style="left:1789px;top:130px;width:1px;height:36px;background:#f9fbfd;"></div>
<svg class="b" style="left:1678px;top:139px;" width="14" height="17" viewBox="0 0 14 17"><rect x="1.500" y="6.500" width="11" height="9" rx="1.200" fill="none" stroke="#001d35" stroke-width="1.700"/><path d="M4 6.500V4.500a3 3 0 0 1 6 0v2" fill="none" stroke="#001d35" stroke-width="1.700"/><circle cx="7" cy="11" r="1.200" fill="#001d35"/></svg>
<span class="t" style="left:1700.00px;top:139.00px;line-height:18px;font-size:14px;color:#001d35;letter-spacing:0.072px;font-weight:500;text-shadow:0.15px 0 0 #001d35;">Compartilhar</span>
<svg class="b" style="left:1800.0px;top:146.25px;" width="7" height="3.5" viewBox="0 0 7 3.5"><path d="M0 0h7L3.5 3.5z" fill="#001d35"/></svg>
<svg class="b" style="left:1834px;top:138px;" width="20" height="20" viewBox="0 0 20 20"><path d="M10 0c.8 5.500 4.500 9.200 10 10-5.500.8-9.200 4.500-10 10-.8-5.500-4.500-9.200-10-10 5.500-.8 9.200-4.500 10-10z" fill="#3c4043"/></svg>
<svg class="b" style="left:1870px;top:130px;" width="36" height="36" viewBox="0 0 36 36"><circle cx="18" cy="18" r="17" fill="none" stroke="#ea4335" stroke-width="2" stroke-dasharray="26.700 80.100" transform="rotate(-135 18 18)"/><circle cx="18" cy="18" r="17" fill="none" stroke="#4285f4" stroke-width="2" stroke-dasharray="26.700 80.100" transform="rotate(-45 18 18)"/><circle cx="18" cy="18" r="17" fill="none" stroke="#34a853" stroke-width="2" stroke-dasharray="26.700 80.100" transform="rotate(45 18 18)"/><circle cx="18" cy="18" r="17" fill="none" stroke="#fbbc04" stroke-width="2" stroke-dasharray="26.700 80.100" transform="rotate(135 18 18)"/><circle cx="18" cy="18" r="15" fill="#3f5fc0"/><path d="M4 22h28M5 26h26" stroke="#e6ebf8" stroke-width="1"/><path d="M11 10c2-2 5-2 7 0 2-2 5-2 7 0 0 7-3 13-7 16-4-3-7-9-7-16z" fill="#3f5fc0" stroke="#fff" stroke-width="1.400"/><circle cx="14.800" cy="13.500" r="2.400" fill="none" stroke="#fff" stroke-width="1.200"/><circle cx="21.200" cy="13.500" r="2.400" fill="none" stroke="#fff" stroke-width="1.200"/><path d="M16.500 17.500l1.500 2.500 1.500-2.500z" fill="#fff"/></svg>
<div class="b" style="left:14px;top:179px;width:1842px;height:37px;background:#f0f4f9;border-radius:19px"></div>
<div class="b" style="left:22px;top:185px;width:89px;height:26px;background:#ffffff;border-radius:13px"></div>
<svg class="b" style="left:31px;top:190px;" width="15" height="15" viewBox="0 0 15 15"><circle cx="6" cy="6" r="4.300" fill="none" stroke="#444746" stroke-width="1.700"/><path d="M9.200 9.200l4.500 4.500" stroke="#444746" stroke-width="1.900"/></svg>
<span class="t" style="left:55.00px;top:188.50px;line-height:17px;font-size:13px;color:#444746;transform:scaleX(0.9739);">Menus</span>
<svg class="b" style="left:120px;top:191px;" width="14" height="14" viewBox="0 0 14 14"><path d="M4.200 2.500L1.500 5.300l2.700 2.800" fill="none" stroke="#444746" stroke-width="1.500"/><path d="M1.800 5.300h6.500a3.400 3.400 0 0 1 0 6.800H5" fill="none" stroke="#444746" stroke-width="1.500"/></svg>
<svg class="b" style="left:149px;top:191px;" width="14" height="14" viewBox="0 0 14 14"><path d="M9.800 2.500l2.700 2.800-2.700 2.800" fill="none" stroke="#444746" stroke-width="1.500"/><path d="M12.200 5.300H5.700a3.400 3.400 0 0 0 0 6.800H9" fill="none" stroke="#444746" stroke-width="1.500"/></svg>
<svg class="b" style="left:177px;top:190px;" width="16" height="16" viewBox="0 0 16 16"><rect x="4" y="1.500" width="8" height="3.500" fill="none" stroke="#444746" stroke-width="1.500"/><rect x="1.200" y="5" width="13.600" height="6.500" rx="1.500" fill="none" stroke="#444746" stroke-width="1.500"/><rect x="4" y="9" width="8" height="5.300" fill="#f0f4f9" stroke="#444746" stroke-width="1.500"/></svg>
<svg class="b" style="left:207px;top:190px;" width="14" height="17" viewBox="0 0 14 17"><rect x="1" y="1" width="10.500" height="4" rx="0.800" fill="none" stroke="#444746" stroke-width="1.500"/><path d="M11.500 3h1.700v4.500H7v3" fill="none" stroke="#444746" stroke-width="1.500"/><rect x="5.600" y="10.500" width="2.800" height="5" rx="0.600" fill="none" stroke="#444746" stroke-width="1.400"/></svg>
<span class="t" style="left:238.00px;top:189.50px;line-height:17px;font-size:13px;color:#444746;transform:scaleX(0.9625);">100%</span>
<svg class="b" style="left:282.0px;top:196.5px;" width="8" height="4.0" viewBox="0 0 8 4.0"><path d="M0 0h8L4.0 4.0z" fill="#444746"/></svg>
<div class="b" style="left:301px;top:188px;width:1px;height:20px;background:#c7c7c7;"></div>
<span class="t" style="left:312.00px;top:189.50px;line-height:16px;font-size:12px;color:#444746;transform:scaleX(0.9127);font-weight:500;text-shadow:0.2px 0 0 #444746;">R$</span>
<span class="t" style="left:342.66px;top:189.50px;line-height:16px;font-size:12px;color:#444746;">%</span>
<span class="t" style="left:370.00px;top:189.00px;line-height:14px;font-size:11px;color:#444746;font-weight:700;">.0</span>
<svg class="b" style="left:377px;top:200px;" width="9" height="6" viewBox="0 0 9 6"><path d="M8.500 3H1.500M3.800 .7L1.500 3l2.300 2.300" fill="none" stroke="#444746" stroke-width="1.200"/></svg>
<span class="t" style="left:398.00px;top:189.00px;line-height:14px;font-size:11px;color:#444746;transform:scaleX(0.9156);font-weight:700;">.00</span>
<svg class="b" style="left:405px;top:200px;" width="9" height="6" viewBox="0 0 9 6"><path d="M.5 3h7M5.200 .7L7.500 3 5.200 5.300" fill="none" stroke="#444746" stroke-width="1.200"/></svg>
<span class="t" style="left:428.00px;top:191.00px;line-height:14px;font-size:11px;color:#444746;transform:scaleX(0.8719);">123</span>
<div class="b" style="left:454px;top:188px;width:1px;height:20px;background:#c7c7c7;"></div>
<span class="t" style="left:469.00px;top:188.50px;line-height:17px;font-size:13px;color:#444746;letter-spacing:0.166px;">Calibri</span>
<svg class="b" style="left:529.0px;top:196.5px;" width="8" height="4.0" viewBox="0 0 8 4.0"><path d="M0 0h8L4.0 4.0z" fill="#444746"/></svg>
<div class="b" style="left:551px;top:188px;width:1px;height:20px;background:#c7c7c7;"></div>
<div class="b" style="left:560px;top:197.3px;width:10px;height:1.4px;background:#444746;"></div>
<div class="b" style="left:579px;top:187px;width:31px;height:21px;border:1px solid #444746;border-radius:4px;box-sizing:border-box"></div>
<span class="t" style="left:588.50px;top:189.50px;line-height:17px;font-size:13px;color:#1f1f1f;transform:scaleX(0.8892);">11</span>
<svg class="b" style="left:617px;top:192.5px;" width="11" height="11" viewBox="0 0 11 11"><path d="M5.500 .500v10M.500 5.500h10" stroke="#444746" stroke-width="1.400"/></svg>
<div class="b" style="left:638px;top:188px;width:1px;height:20px;background:#c7c7c7;"></div>
<span class="t" style="left:649.94px;top:189.00px;line-height:18px;font-size:14px;color:#444746;font-weight:700;">B</span>
<span class="t" style="left:682.06px;top:189.00px;line-height:18px;font-size:14px;color:#444746;font-style:italic;font-weight:700;">I</span>
<span class="t" style="left:709.66px;top:189.50px;line-height:17px;font-size:13px;color:#444746;">S</span>
<div class="b" style="left:706.5px;top:197.7px;width:15px;height:1.3px;background:#444746;"></div>
<span class="t" style="left:739.16px;top:187.50px;line-height:17px;font-size:13px;color:#444746;">A</span>
<div class="b" style="left:733px;top:203px;width:21px;height:3px;background:#000000;"></div>
<div class="b" style="left:762px;top:188px;width:1px;height:20px;background:#c7c7c7;"></div>
<svg class="b" style="left:771px;top:188px;" width="20" height="18" viewBox="0 0 20 18"><path d="M4.500 3.500l6.800 6.800-4.300 4.300a1 1 0 0 1-1.400 0L1.800 10.800a1 1 0 0 1 0-1.400L6.800 4.400" fill="#444746" transform="translate(3,-2)"/><path d="M15.500 9.500c.9 1.300 1.500 2.100 1.500 2.900a1.500 1.500 0 0 1-3 0c0-.8.600-1.600 1.500-2.900z" fill="#444746"/></svg>
<div class="b" style="left:770px;top:203px;width:21px;height:3px;background:#ffffff;"></div>
<svg class="b" style="left:804px;top:190.5px;" width="15" height="15" viewBox="0 0 15 15"><rect x=".9" y=".9" width="13.200" height="13.200" fill="none" stroke="#444746" stroke-width="1.700"/><path d="M7.500 1v13M1 7.500h13" stroke="#444746" stroke-width="1.500"/></svg>
<svg class="b" style="left:834px;top:190.5px;" width="15" height="15" viewBox="0 0 15 15"><path d="M5 1H1v4M10 1h4v4M5 14H1v-4M10 14h4v-4M1 7.500h4M14 7.500h-4M3.500 5.500l2 2-2 2M11.500 5.500l-2 2 2 2" fill="none" stroke="#b4b8bd" stroke-width="1.400"/></svg>
<svg class="b" style="left:856.0px;top:196.5px;" width="8" height="4.0" viewBox="0 0 8 4.0"><path d="M0 0h8L4.0 4.0z" fill="#c0c3c7"/></svg>
<div class="b" style="left:869px;top:188px;width:1px;height:20px;background:#c7c7c7;"></div>
<svg class="b" style="left:879px;top:191.5px;" width="14" height="14" viewBox="0 0 14 14"><path d="M0 1h14M0 5h9M0 9h14M0 13h9" stroke="#444746" stroke-width="1.500"/></svg>
<svg class="b" style="left:898.0px;top:196.5px;" width="8" height="4.0" viewBox="0 0 8 4.0"><path d="M0 0h8L4.0 4.0z" fill="#444746"/></svg>
<svg class="b" style="left:916px;top:191px;" width="13" height="15" viewBox="0 0 13 15"><path d="M6.500 0v9.500M2.800 6l3.700 3.700L10.200 6" fill="none" stroke="#444746" stroke-width="1.500"/><path d="M.500 13.500h12" stroke="#444746" stroke-width="1.500"/></svg>
<svg class="b" style="left:935.0px;top:196.5px;" width="8" height="4.0" viewBox="0 0 8 4.0"><path d="M0 0h8L4.0 4.0z" fill="#444746"/></svg>
<svg class="b" style="left:953px;top:191.5px;" width="14" height="14" viewBox="0 0 14 14"><path d="M1 0v14M5 0v14" stroke="#444746" stroke-width="1.500"/><path d="M5 7h8M10 4l3 3-3 3" fill="none" stroke="#444746" stroke-width="1.500"/></svg>
<svg class="b" style="left:972.0px;top:196.5px;" width="8" height="4.0" viewBox="0 0 8 4.0"><path d="M0 0h8L4.0 4.0z" fill="#444746"/></svg>
<span class="t" style="left:990.66px;top:188.00px;line-height:17px;font-size:13px;color:#444746;">A</span>
<svg class="b" style="left:989px;top:202px;" width="14" height="6" viewBox="0 0 14 6"><path d="M0 3h12M9.500 .500L12 3 9.500 5.500" fill="none" stroke="#444746" stroke-width="1.300"/></svg>
<svg class="b" style="left:1009.0px;top:196.5px;" width="8" height="4.0" viewBox="0 0 8 4.0"><path d="M0 0h8L4.0 4.0z" fill="#444746"/></svg>
<div class="b" style="left:1024px;top:188px;width:1px;height:20px;background:#c7c7c7;"></div>
<svg class="b" style="left:1034px;top:193px;" width="16" height="10" viewBox="0 0 16 10"><path d="M6.500 1.200H4.500a3.800 3.800 0 0 0 0 7.600h2M9.500 1.200h2a3.800 3.800 0 0 1 0 7.600h-2M5 5h6" fill="none" stroke="#b4b8bd" stroke-width="1.500"/></svg>
<svg class="b" style="left:1063px;top:190px;" width="16" height="16" viewBox="0 0 16 16"><path d="M1.200 1.200h13.600v10.300H4.200l-3 3z" fill="none" stroke="#444746" stroke-width="1.500" stroke-linejoin="round"/><path d="M8 3.500v5.600M5.200 6.300h5.600" stroke="#444746" stroke-width="1.400"/></svg>
<svg class="b" style="left:1093px;top:191.5px;" width="14" height="14" viewBox="0 0 14 14"><rect x=".8" y=".8" width="12.400" height="12.400" rx="1.500" fill="none" stroke="#444746" stroke-width="1.500"/><path d="M4.200 10.500v-4M7 10.500v-6.500M9.800 10.500v-2.300" stroke="#444746" stroke-width="1.500"/></svg>
<div class="b" style="left:1115px;top:184px;width:28px;height:27px;background:#d3e3fd;border-radius:4px"></div>
<svg class="b" style="left:1123px;top:192px;" width="12" height="13" viewBox="0 0 12 13"><path d="M0 0h12L7.300 6.300v6L4.700 10.500V6.300z" fill="#041e49"/></svg>
<svg class="b" style="left:1148px;top:190px;" width="16" height="16" viewBox="0 0 16 16"><path d="M1 12V2.500A1.500 1.500 0 0 1 2.500 1H12" fill="none" stroke="#444746" stroke-width="1.500"/><rect x="3.800" y="3.800" width="11.400" height="11.400" rx="1.200" fill="none" stroke="#444746" stroke-width="1.500"/><path d="M3.800 7.300h11.400M3.800 11h11.400M7.600 7.300v8M11.400 7.300v8" stroke="#444746" stroke-width="1.200"/></svg>
<svg class="b" style="left:1168.0px;top:196.5px;" width="8" height="4.0" viewBox="0 0 8 4.0"><path d="M0 0h8L4.0 4.0z" fill="#444746"/></svg>
<span class="t" style="left:1190.36px;top:188.00px;line-height:20px;font-size:15px;color:#444746;font-weight:700;">Σ</span>
<svg class="b" style="left:1825px;top:194.5px;" width="11" height="7" viewBox="0 0 11 7"><path d="M1 6l4.500-4.500L10 6" fill="none" stroke="#444746" stroke-width="1.600"/></svg>
<div class="b" style="left:0px;top:223px;width:1855px;height:26px;background:#ffffff;"></div>
<div class="b" style="left:0px;top:248px;width:1869px;height:1px;background:#c0c0c0;"></div>
<span class="t" style="left:12.00px;top:227.00px;line-height:16px;font-size:12px;color:#1f1f1f;transform:scaleX(0.8857);">A1</span>
<svg class="b" style="left:76.0px;top:233.5px;" width="8" height="4.0" viewBox="0 0 8 4.0"><path d="M0 0h8L4.0 4.0z" fill="#444746"/></svg>
<span class="t" style="left:105.00px;top:226.00px;line-height:18px;font-size:14px;color:#80868b;font-style:italic;font-family:'Liberation Serif',serif;letter-spacing:-0.500px;">fx</span>
<span class="t" style="left:128.00px;top:228.00px;line-height:14px;font-size:11px;color:#1f1f1f;font-family:'Liberation Mono',monospace;-webkit-text-stroke:0;">=</span>
<span class="t" style="left:134.50px;top:228.00px;line-height:14px;font-size:11px;color:#f7981d;transform:scaleX(0.9695);font-family:'Liberation Mono',monospace;-webkit-text-stroke:0;">CAD_COM!A1</span>
<div class="b" style="left:1859px;top:249px;width:10px;height:149px;background:#f8f9fa;border-left:1px solid #c7c7c7;box-sizing:border-box"></div>
<div class="b" style="left:1859px;top:403px;width:10px;height:642px;background:#ffffff;"></div>
<div class="b" style="left:1869px;top:170px;width:51px;height:910px;background:#f9fbfd;"></div>
<svg class="b" style="left:1886px;top:190px;" width="18" height="18" viewBox="0 0 18 18"><rect x="1" y="1" width="16" height="16" rx="2" fill="#fff"/><path d="M1 3a2 2 0 0 1 2-2h10v3.500H4.500V13H1z" fill="#4285f4"/><path d="M13 1h2a2 2 0 0 1 2 2v1.500h-4z" fill="#1967d2"/><path d="M13.500 4.500H17V13h-3.500z" fill="#fbbc04"/><path d="M4.500 13.500H13.500V17H3a2 2 0 0 1-2-2v-1.500z" fill="#34a853"/><path d="M1 13h3.500v4H3a2 2 0 0 1-2-2z" fill="#188038"/><path d="M13.500 13.500H17L13.500 17z" fill="#ea4335"/><text x="9" y="11.800" text-anchor="middle" font-family="Liberation Sans,sans-serif" font-size="7" font-weight="700" fill="#4285f4">31</text></svg>
<svg class="b" style="left:1886.5px;top:241.5px;" width="17" height="17" viewBox="0 0 17 17"><rect x="0" y="0" width="17" height="17" rx="2.200" fill="#f5b921"/><path d="M8.500 3.200a3.400 3.400 0 0 0-1.800 6.300v1.300h3.600V9.500A3.400 3.400 0 0 0 8.500 3.200zM6.700 11.800h3.600v1.400H6.700z" fill="#fff"/></svg>
<svg class="b" style="left:1885px;top:290px;" width="20" height="20" viewBox="0 0 20 20"><circle cx="10" cy="10.500" r="7" fill="none" stroke="#1a73e8" stroke-width="2.400"/><path d="M6.500 10.300l2.800 2.800 7-7.300" fill="none" stroke="#1a73e8" stroke-width="2.600"/><circle cx="17" cy="4.500" r="2" fill="#f9fbfd"/><circle cx="16.800" cy="4.800" r="1.300" fill="#1a73e8"/></svg>
<svg class="b" style="left:1886px;top:341px;" width="18" height="18" viewBox="0 0 18 18"><circle cx="9" cy="5" r="3" fill="#2f57c9"/><path d="M3 16.500c0-3.800 2.200-6 6-6s6 2.200 6 6z" fill="#5f86e3"/><path d="M9 10.500c3.800 0 6 2.200 6 6H6.500c0-2.500 1-4.500 2.500-6z" fill="#2f57c9"/></svg>
<svg class="b" style="left:1885px;top:391px;" width="20" height="22" viewBox="0 0 20 22"><path d="M10 1a6.500 6.500 0 0 0-6.500 6.500c0 4.500 4.800 7 6.500 13 1.700-6 6.500-8.500 6.500-13A6.500 6.500 0 0 0 10 1z" fill="#34a853"/><path d="M10 1a6.500 6.500 0 0 0-5.200 2.600L10 7.500z" fill="#ea4335" /><path d="M4.800 3.600A6.500 6.500 0 0 0 3.500 7.500c0 1.500.6 2.800 1.400 4.100L10 7.500z" fill="#fbbc04"/><path d="M10 1v6.500l5-4.200A6.500 6.500 0 0 0 10 1z" fill="#4285f4"/><path d="M15 3.300L10 7.500l4.900 4.300c.9-1.300 1.600-2.700 1.600-4.300 0-1.600-.6-3-1.500-4.200z" fill="#1a73e8" opacity=".0"/><circle cx="10" cy="7.500" r="2.300" fill="#fff"/></svg>
<div class="b" style="left:1886px;top:440px;width:18px;height:1px;background:#dadce0;"></div>
<svg class="b" style="left:1888px;top:474px;" width="14" height="14" viewBox="0 0 14 14"><path d="M7 1v12M1 7h12" stroke="#1f1f1f" stroke-width="1.700"/></svg>
<div class="b" style="left:1859px;top:398px;width:10px;height:5px;background:#e8eaed;"></div>
<div class="b" style="left:1861px;top:404px;width:7px;height:62px;background:#dadce0;border-radius:4px"></div>
<svg class="b" style="left:1860px;top:1006px;" width="9" height="29" viewBox="0 0 9 29"><rect x="0" y="0" width="9" height="29" fill="#f8f9fa"/><path d="M0 .500h9M0 14.500h9M0 28.500h9" stroke="#e0e0e0" stroke-width="1"/><path d="M2.300 9l2.200-2.800L6.700 9zM2.300 20l2.200 2.800 2.200-2.800z" fill="#a0a0a0"/></svg>
<div class="b" style="left:0px;top:1034px;width:1859px;height:11px;background:#ffffff;"></div>
<div class="b" style="left:0px;top:1034px;width:789px;height:11px;background:#f8f9fa;border-top:1px solid #e3e3e3;box-sizing:border-box"></div>
<div class="b" style="left:789px;top:1034px;width:4px;height:11px;background:#dfe3eb;"></div>
<div class="b" style="left:795px;top:1035px;width:95px;height:8px;background:#dadce0;border-radius:4px"></div>
<svg class="b" style="left:1833px;top:1035px;" width="36" height="10" viewBox="0 0 36 10"><rect x="0" y="0" width="36" height="10" fill="#f8f9fa"/><path d="M.500 0v10M14.500 0v10M26.500 0v10M28.500 0v10" stroke="#e0e0e0"/><path d="M9 2.300L6.200 4.800 9 7.300zM19.500 2.300l2.800 2.500-2.800 2.500z" fill="#a0a0a0"/></svg>
<div class="b" style="left:0px;top:1045px;width:1920px;height:35px;background:#f9fbfd;"></div>
<div class="b" style="left:0px;top:1045px;width:1869px;height:1px;background:#e4e7eb;"></div>
<svg class="b" style="left:49px;top:1056px;" width="12" height="12" viewBox="0 0 12 12"><path d="M6 .500v11M.500 6h11" stroke="#444746" stroke-width="1.500"/></svg>
<svg class="b" style="left:85px;top:1057px;" width="13" height="10" viewBox="0 0 13 10"><path d="M0 1h13M0 5h13M0 9h13" stroke="#444746" stroke-width="1.500"/></svg>
<div class="b" style="left:507px;top:1046px;width:102px;height:32px;background:#e1e9f7;"></div>
<span class="t" style="left:132.00px;top:1053.70px;line-height:17px;font-size:13px;color:#444746;letter-spacing:0.277px;font-weight:500;text-shadow:0.25px 0 0 #444746;">AJUDA</span>
<svg class="b" style="left:185.0px;top:1061.0px;" width="8" height="4.0" viewBox="0 0 8 4.0"><path d="M0 0h8L4.0 4.0z" fill="#444746"/></svg>
<span class="t" style="left:215.00px;top:1053.70px;line-height:17px;font-size:13px;color:#444746;transform:scaleX(0.9820);font-weight:500;text-shadow:0.25px 0 0 #444746;">CAD_CAR</span>
<svg class="b" style="left:285.0px;top:1061.0px;" width="8" height="4.0" viewBox="0 0 8 4.0"><path d="M0 0h8L4.0 4.0z" fill="#444746"/></svg>
<span class="t" style="left:316.00px;top:1053.70px;line-height:17px;font-size:13px;color:#444746;transform:scaleX(0.9557);font-weight:500;text-shadow:0.25px 0 0 #444746;">CAD_PES</span>
<svg class="b" style="left:383.0px;top:1061.0px;" width="8" height="4.0" viewBox="0 0 8 4.0"><path d="M0 0h8L4.0 4.0z" fill="#444746"/></svg>
<span class="t" style="left:415.00px;top:1053.70px;line-height:17px;font-size:13px;color:#444746;transform:scaleX(0.9845);font-weight:500;text-shadow:0.25px 0 0 #444746;">CAD_COM</span>
<svg class="b" style="left:488.0px;top:1061.0px;" width="8" height="4.0" viewBox="0 0 8 4.0"><path d="M0 0h8L4.0 4.0z" fill="#444746"/></svg>
<span class="t" style="left:518.00px;top:1053.70px;line-height:17px;font-size:13px;color:#0b57d0;letter-spacing:0.330px;font-weight:500;text-shadow:0.4px 0 0 #0b57d0;">LAN_MAP</span>
<svg class="b" style="left:590.0px;top:1061.0px;" width="8" height="4.0" viewBox="0 0 8 4.0"><path d="M0 0h8L4.0 4.0z" fill="#0b57d0"/></svg>
<span class="t" style="left:620.00px;top:1053.70px;line-height:17px;font-size:13px;color:#444746;transform:scaleX(0.9838);font-weight:500;text-shadow:0.25px 0 0 #444746;">LAN_GAP</span>
<svg class="b" style="left:688.0px;top:1061.0px;" width="8" height="4.0" viewBox="0 0 8 4.0"><path d="M0 0h8L4.0 4.0z" fill="#444746"/></svg>
<span class="t" style="left:719.00px;top:1053.70px;line-height:17px;font-size:13px;color:#444746;transform:scaleX(0.9459);font-weight:500;text-shadow:0.25px 0 0 #444746;">DASH1</span>
<svg class="b" style="left:769.0px;top:1061.0px;" width="8" height="4.0" viewBox="0 0 8 4.0"><path d="M0 0h8L4.0 4.0z" fill="#444746"/></svg>
<span class="t" style="left:800.00px;top:1053.70px;line-height:17px;font-size:13px;color:#444746;transform:scaleX(0.9690);font-weight:500;text-shadow:0.25px 0 0 #444746;">DASH2</span>
<svg class="b" style="left:851.0px;top:1061.0px;" width="8" height="4.0" viewBox="0 0 8 4.0"><path d="M0 0h8L4.0 4.0z" fill="#444746"/></svg>
<span class="t" style="left:882.00px;top:1053.70px;line-height:17px;font-size:13px;color:#444746;transform:scaleX(0.9920);font-weight:500;text-shadow:0.25px 0 0 #444746;">DASH3</span>
<svg class="b" style="left:934.0px;top:1061.0px;" width="8" height="4.0" viewBox="0 0 8 4.0"><path d="M0 0h8L4.0 4.0z" fill="#444746"/></svg>
<span class="t" style="left:965.00px;top:1053.70px;line-height:17px;font-size:13px;color:#444746;transform:scaleX(0.9920);font-weight:500;text-shadow:0.25px 0 0 #444746;">DASH4</span>
<svg class="b" style="left:1018.0px;top:1061.0px;" width="8" height="4.0" viewBox="0 0 8 4.0"><path d="M0 0h8L4.0 4.0z" fill="#444746"/></svg>
<svg class="b" style="left:1890px;top:1047px;" width="10" height="12" viewBox="0 0 10 12"><path d="M2.500 1.500L7.500 6 2.500 10.500" fill="none" stroke="#444746" stroke-width="1.600"/></svg>
<div class="b" style="left:0px;top:1078px;width:1920px;height:2px;background:#f3ece2;"></div>
</body></html>
